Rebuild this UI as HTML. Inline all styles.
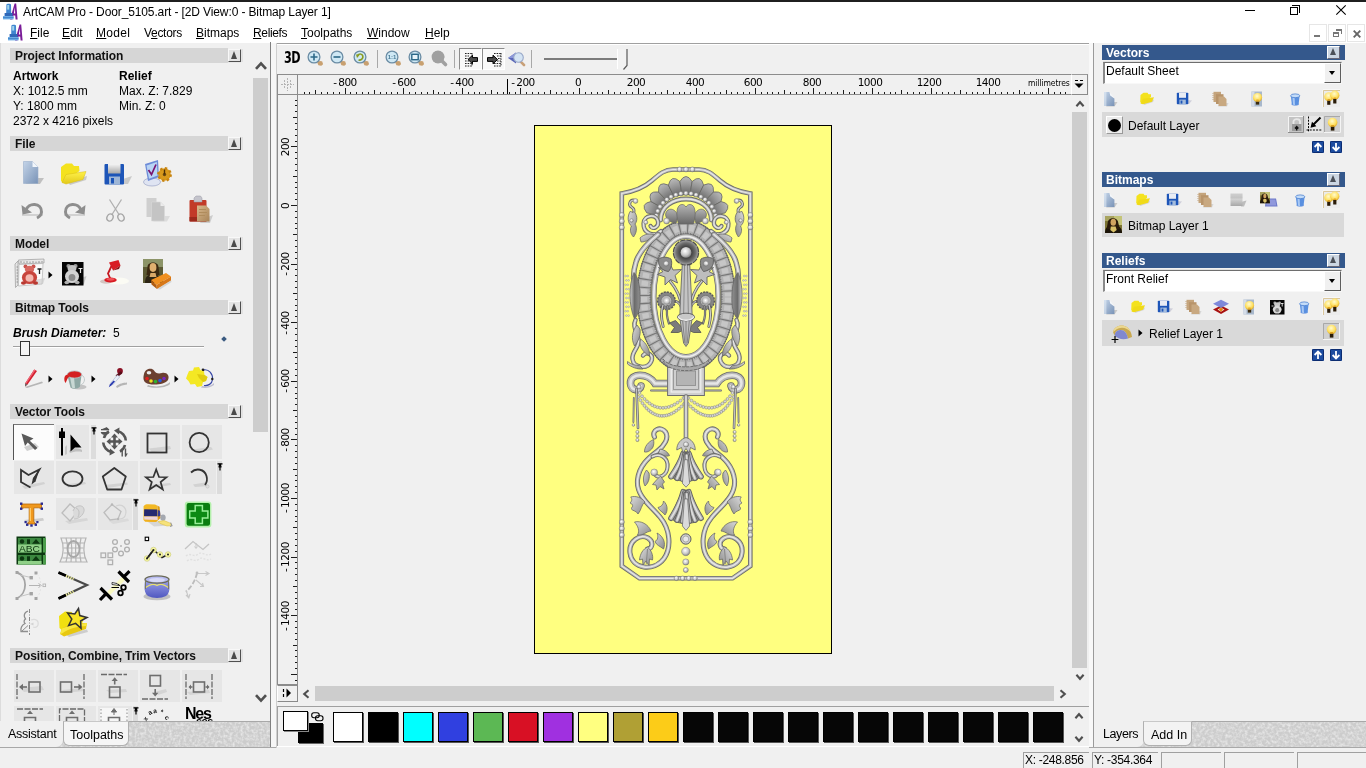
<!DOCTYPE html>
<html lang="en">
<head>
<meta charset="utf-8">
<title>ArtCAM Pro - Door_5105.art - [2D View:0 - Bitmap Layer 1]</title>
<style>
*{box-sizing:border-box;margin:0;padding:0}
html,body{width:1366px;height:768px;overflow:hidden;background:#f0f0f0}
body{position:relative;font-family:"Liberation Sans",Arial,sans-serif;font-size:12px;color:#000;line-height:1}
#app{position:absolute;left:0;top:0;width:1366px;height:768px;overflow:hidden;will-change:transform}
.a{position:absolute}
.ui{font-family:"Liberation Sans","DejaVu Sans",sans-serif;font-size:12px;white-space:nowrap}
.t{position:absolute;white-space:nowrap;font-size:12px;line-height:14px;height:14px}
.b{font-weight:bold}
u{text-decoration:underline;text-underline-offset:1px}
/* left panel section headers */
.hd{position:absolute;left:10px;width:218px;height:15px;background:#d6d6d6}
.hd span{position:absolute;left:5px;top:1px;letter-spacing:-.1px;font-weight:bold;font-size:12px;line-height:15px;white-space:nowrap;color:#111}
.hb{position:absolute;left:228px;width:13px;height:13px;background:#e4e4e4;border-right:1px solid #505050;border-bottom:1px solid #505050;border-left:1px solid #f8f8f8;border-top:1px solid #f8f8f8;box-shadow:2px 0 0 #e2e2e2,0 1px 0 #e8e8e8}
.hb i{position:absolute;left:2px;top:1px;width:0;height:0;border-left:3.5px solid transparent;border-right:3.5px solid transparent;border-bottom:8px solid #4a4a4a}
.cell{position:absolute;background:#e6e6e6}
.pin{position:absolute;background:#dcdcdc;width:5px}
svg{position:absolute;overflow:visible}
/* right panel */
.rh{position:absolute;left:1102px;width:243px;height:15px;background:#34588c}
.rh span{position:absolute;left:4px;top:1px;font-weight:bold;font-size:12px;line-height:15px;color:#fff;white-space:nowrap}
.rhb{position:absolute;left:1327px;width:13px;height:13px;background:#ccd6e2;border-right:1px solid #667;border-bottom:1px solid #667;border-left:1px solid #fff;border-top:1px solid #fff}
.rhb i{position:absolute;left:2px;top:1px;width:0;height:0;border-left:3.5px solid transparent;border-right:3.5px solid transparent;border-bottom:7.5px solid #4c5058}
.row{position:absolute;left:1102px;width:242px;background:#d9d9d9}
.combo{position:absolute;left:1103px;width:239px;height:22px;background:#fff;border-top:1px solid #6e6e6e;border-left:2px solid #8a8a8a;border-right:1px solid #f4f4f4;border-bottom:1px solid #f8f8f8;box-shadow:0 -1px 0 #e0e0e0}
.combo span{position:absolute;left:1px;top:1px;font-size:12px;line-height:14px;white-space:nowrap}
.combo b{position:absolute;right:0;top:0;width:17px;height:20px;background:#f0f0f0;border-right:1px solid #5e5e5e;border-bottom:1px solid #5e5e5e;border-left:1px solid #fff;border-top:1px solid #fff}
.combo b i{position:absolute;left:4px;top:7px;width:0;height:0;border-left:3.5px solid transparent;border-right:3.5px solid transparent;border-top:4px solid #000}
.rl{font-family:"DejaVu Sans","Liberation Sans",sans-serif;font-size:10.5px;letter-spacing:-.5px;line-height:12px;white-space:nowrap;color:#000}
.rl .hy{letter-spacing:1.2px}
.sw{position:absolute;top:712px;width:30px;height:30px;border:1px solid #000;box-shadow:1px 1px 0 #555}
.sp{position:absolute;top:752px;height:16px;border-left:1px solid #a0a0a0;border-top:1px solid #a0a0a0;font-family:"Liberation Sans",sans-serif;font-size:12px;line-height:15px;padding-left:2px;white-space:nowrap}
</style>
</head>
<body>
<div id="app">
<!-- window frame / title bar -->
<div class="a" style="left:0;top:0;width:1366px;height:2px;background:#1f1f1f"></div>
<div class="a" style="left:0;top:2px;width:1366px;height:41px;background:#fff"></div>
<svg style="left:1.5px;top:2.5px" width="16" height="17" viewBox="0 0 16 17"><path d="M8 16.5 L12.6 0.5 L14.2 0.5 L15.6 16.5 L13.6 16.5 L13.2 12.4 L11.4 12.4 L10.4 16.5Z" fill="#7a1c98"/><path d="M11.8 10.4 L12.9 4.4 L13.2 10.4Z" fill="#fff"/><path d="M4.4 1.8 C4.4 0.4 9 0.4 9 1.8 L9.2 10 L4.2 10Z" fill="#3f86d0"/><rect x="5.2" y="2" width="2" height="4.6" fill="#9fd4ec"/><rect x="2.6" y="10" width="8" height="3" fill="#2f68b8"/><rect x="1" y="13" width="10.6" height="3.4" fill="#6cace4"/><path d="M1 14.6 H11.6" stroke="#3a78c4" stroke-width=".8"/></svg>
<div class="t ui" style="left:23px;top:5px;font-size:12px;letter-spacing:-0.12px">ArtCAM Pro - Door_5105.art - [2D View:0 - Bitmap Layer 1]</div>
<!-- window buttons -->
<div class="a" style="left:1245px;top:10px;width:10px;height:1px;background:#000"></div>
<div class="a" style="left:1290px;top:7px;width:8px;height:8px;border:1px solid #000;background:#fff"></div>
<div class="a" style="left:1292px;top:5px;width:8px;height:8px;border-top:1px solid #000;border-right:1px solid #000"></div>
<svg style="left:1336px;top:5px" width="10" height="10" viewBox="0 0 10 10"><path d="M0.3 0.3 L9.7 9.7 M9.7 0.3 L0.3 9.7" stroke="#000" stroke-width="1.1" fill="none"/></svg>
<!-- menu bar -->
<svg style="left:7px;top:24px" width="16" height="17" viewBox="0 0 16 17"><path d="M8 16.5 L12.6 0.5 L14.2 0.5 L15.6 16.5 L13.6 16.5 L13.2 12.4 L11.4 12.4 L10.4 16.5Z" fill="#7a1c98"/><path d="M11.8 10.4 L12.9 4.4 L13.2 10.4Z" fill="#fff"/><path d="M4.4 1.8 C4.4 0.4 9 0.4 9 1.8 L9.2 10 L4.2 10Z" fill="#3f86d0"/><rect x="5.2" y="2" width="2" height="4.6" fill="#9fd4ec"/><rect x="2.6" y="10" width="8" height="3" fill="#2f68b8"/><rect x="1" y="13" width="10.6" height="3.4" fill="#6cace4"/><path d="M1 14.6 H11.6" stroke="#3a78c4" stroke-width=".8"/></svg>
<div class="t ui" style="left:30px;top:26px"><u>F</u>ile</div>
<div class="t ui" style="left:62px;top:26px"><u>E</u>dit</div>
<div class="t ui" style="left:96px;top:26px;letter-spacing:.3px"><u>M</u>odel</div>
<div class="t ui" style="left:144px;top:26px;letter-spacing:-.3px">V<u>e</u>ctors</div>
<div class="t ui" style="left:196px;top:26px"><u>B</u>itmaps</div>
<div class="t ui" style="left:253px;top:26px;letter-spacing:-.35px"><u>R</u>eliefs</div>
<div class="t ui" style="left:301px;top:26px"><u>T</u>oolpaths</div>
<div class="t ui" style="left:367px;top:26px"><u>W</u>indow</div>
<div class="t ui" style="left:425px;top:26px"><u>H</u>elp</div>
<!-- MDI child buttons -->
<div class="a" style="left:1309px;top:24px;width:18px;height:18px;border:1px solid #e6e6e6"></div>
<div class="a" style="left:1328px;top:24px;width:18px;height:18px;border:1px solid #e6e6e6"></div>
<div class="a" style="left:1347px;top:24px;width:18px;height:18px;border:1px solid #e6e6e6"></div>
<div class="a" style="left:1314px;top:35px;width:6px;height:2px;background:#777"></div>
<div class="a" style="left:1333px;top:32px;width:6px;height:5px;border:1px solid #777;border-top:2px solid #777"></div>
<div class="a" style="left:1336px;top:29px;width:6px;height:5px;border-top:2px solid #777;border-right:1px solid #777"></div>
<svg style="left:1353px;top:30px" width="8" height="8" viewBox="0 0 8 8"><path d="M0.7 0.7 L7.3 7.3 M7.3 0.7 L0.7 7.3" stroke="#666" stroke-width="1.9" fill="none"/></svg>
<!-- ================= LEFT PANEL ================= -->
<div class="a" style="left:0;top:43px;width:1px;height:705px;background:#dcdcdc"></div>
<div class="a" style="left:270px;top:42px;width:1px;height:706px;background:#808080"></div>
<div class="a" style="left:271px;top:43px;width:5px;height:705px;background:#f6f6f6"></div>
<!-- scrollbar -->
<div class="a" style="left:253px;top:78px;width:15px;height:354px;background:#cdcdcd"></div>
<svg style="left:255px;top:61px" width="12" height="9" viewBox="0 0 12 9"><path d="M1 7.8 L6 2.4 L11 7.8" stroke="#505050" stroke-width="2.7" fill="none"/></svg>
<svg style="left:255px;top:694px" width="12" height="9" viewBox="0 0 12 9"><path d="M1 1.2 L6 6.6 L11 1.2" stroke="#505050" stroke-width="2.7" fill="none"/></svg>

<!-- Project Information -->
<div class="hd" style="top:48px"><span>Project Information</span></div><div class="hb" style="top:49px"><i></i></div>
<div class="t b" style="left:13px;top:69px">Artwork</div>
<div class="t b" style="left:119px;top:69px">Relief</div>
<div class="t" style="left:13px;top:84px">X: 1012.5 mm</div>
<div class="t" style="left:119px;top:84px">Max. Z: 7.829</div>
<div class="t" style="left:13px;top:99px">Y: 1800 mm</div>
<div class="t" style="left:119px;top:99px">Min. Z: 0</div>
<div class="t" style="left:13px;top:114px">2372 x 4216 pixels</div>

<!-- File -->
<div class="hd" style="top:136px"><span>File</span></div><div class="hb" style="top:137px"><i></i></div>
<!--ICONS_FILE-->

<!-- Model -->
<div class="hd" style="top:236px"><span>Model</span></div><div class="hb" style="top:237px"><i></i></div>
<!--ICONS_MODEL-->

<!-- Bitmap Tools -->
<div class="hd" style="top:300px"><span>Bitmap Tools</span></div><div class="hb" style="top:301px"><i></i></div>
<div class="t b" style="left:13px;top:326px;font-style:italic">Brush Diameter:</div>
<div class="t" style="left:113px;top:326px">5</div>
<div class="a" style="left:13px;top:346px;width:191px;height:1px;background:#a0a0a0"></div>
<div class="a" style="left:13px;top:347px;width:191px;height:1px;background:#fff"></div>
<div class="a" style="left:20px;top:341px;width:10px;height:15px;background:#f4f4f4;border:1px solid #333"></div>
<div class="a" style="left:222px;top:337px;width:4px;height:4px;background:#3a5a80;transform:rotate(45deg)"></div>
<!--ICONS_BITMAP-->

<!-- Vector Tools -->
<div class="hd" style="top:404px"><span>Vector Tools</span></div><div class="hb" style="top:405px"><i></i></div>
<!-- row 1 cells -->
<div class="a" style="left:13px;top:424px;width:41px;height:36px;background:#fcfcfc;border-left:1px solid #555;border-top:1px solid #777"></div>
<div class="cell" style="left:56px;top:425px;width:33px;height:34px"></div><div class="pin" style="left:91px;top:425px;height:34px"></div>
<div class="cell" style="left:140px;top:425px;width:40px;height:34px"></div>
<div class="cell" style="left:182px;top:425px;width:40px;height:34px"></div>
<!-- row 2 cells -->
<div class="cell" style="left:14px;top:461px;width:40px;height:33px"></div>
<div class="cell" style="left:56px;top:461px;width:40px;height:33px"></div>
<div class="cell" style="left:98px;top:461px;width:40px;height:33px"></div>
<div class="cell" style="left:140px;top:461px;width:40px;height:33px"></div>
<div class="cell" style="left:182px;top:461px;width:34px;height:33px"></div><div class="pin" style="left:217px;top:461px;height:33px"></div>
<!-- row 3 cells -->
<div class="cell" style="left:56px;top:498px;width:40px;height:32px"></div>
<div class="cell" style="left:98px;top:498px;width:34px;height:32px"></div><div class="pin" style="left:133px;top:498px;height:32px"></div>
<!--ICONS_VECTOR-->

<!-- Position, Combine, Trim Vectors -->
<div class="hd" style="top:648px"><span>Position, Combine, Trim Vectors</span></div><div class="hb" style="top:649px"><i></i></div>
<div class="cell" style="left:14px;top:670px;width:40px;height:32px"></div>
<div class="cell" style="left:56px;top:670px;width:40px;height:32px"></div>
<div class="cell" style="left:98px;top:670px;width:40px;height:32px"></div>
<div class="cell" style="left:140px;top:670px;width:40px;height:32px"></div>
<div class="cell" style="left:182px;top:670px;width:40px;height:32px"></div>
<div class="cell" style="left:14px;top:706px;width:40px;height:15px"></div>
<div class="cell" style="left:56px;top:706px;width:40px;height:15px"></div>
<div class="cell" style="left:98px;top:706px;width:34px;height:15px"></div><div class="pin" style="left:133px;top:706px;height:15px"></div>
<!--ICONS_POS-->

<!-- bottom tabs -->
<svg style="left:1px;top:721px" width="269" height="26"><filter id="nz1" color-interpolation-filters="sRGB" x="0" y="0" width="100%" height="100%"><feTurbulence type="fractalNoise" baseFrequency="0.35" numOctaves="2" seed="3"/><feColorMatrix type="matrix" values="0 0 0 0 0.80  0 0 0 0 0.80  0 0 0 0 0.80  1.6 0 0 0 0.0"/></filter><rect width="269" height="26" fill="#f2f2f2"/><rect width="269" height="26" filter="url(#nz1)"/></svg>
<div class="a" style="left:63px;top:721px;width:207px;height:1px;background:#a8a8a8"></div>
<div class="a" style="left:0;top:721px;width:63px;height:26px;background:#f0f0f0;border-bottom-right-radius:7px"></div>
<div class="a" style="left:63px;top:721px;width:66px;height:25px;background:#f5f5f5;border:1px solid #b0b0b0;border-top-color:#c8c8c8;border-radius:0 0 6px 6px"></div>
<div class="a" style="left:0;top:747px;width:276px;height:1px;background:#a8a8a8"></div>
<div class="t ui" style="left:8px;top:727px;font-size:12.5px;letter-spacing:-.25px">Assistant</div>
<div class="t ui" style="left:70px;top:728px;font-size:12.5px">Toolpaths</div>
<!-- shared gradient defs -->
<svg width="0" height="0" style="left:0;top:0"><defs>
<linearGradient id="gDoc" x1="0" y1="0" x2="1" y2="1"><stop offset="0" stop-color="#c4d4e8"/><stop offset="1" stop-color="#7892b6"/></linearGradient>
<linearGradient id="gFold" x1="0" y1="0" x2="0" y2="1"><stop offset="0" stop-color="#fff24a"/><stop offset="1" stop-color="#e2c81a"/></linearGradient>
<linearGradient id="gGrey" x1="0" y1="0" x2="0" y2="1"><stop offset="0" stop-color="#f4f4f4"/><stop offset="1" stop-color="#a8a8a8"/></linearGradient>
<linearGradient id="gBowl" x1="0" y1="0" x2="0" y2="1"><stop offset="0" stop-color="#9aa0e8"/><stop offset="1" stop-color="#5058c0"/></linearGradient>
<radialGradient id="gBulb" cx="0.45" cy="0.35" r="0.7"><stop offset="0" stop-color="#fffbd0"/><stop offset="0.6" stop-color="#ffe060"/><stop offset="1" stop-color="#d8a020"/></radialGradient>
<linearGradient id="gTan" x1="0" y1="0" x2="1" y2="1"><stop offset="0" stop-color="#d8b88c"/><stop offset="1" stop-color="#a88458"/></linearGradient>
</defs></svg>

<!-- FILE row 1 -->
<!-- new -->
<svg style="left:22px;top:160px" width="24" height="26" viewBox="0 0 24 26"><path d="M14 18 L22 18 L18 24 L3 24 Z" fill="#b4b4b4" opacity=".8"/><path d="M1.5 1.5 L10.5 1.5 L16 7 L16 23.5 L1.5 23.5 Z" fill="url(#gDoc)" stroke="#9ab0cc" stroke-width=".6"/><path d="M10.5 1.5 L10.5 7 L16 7 Z" fill="#f2f6fb"/></svg>
<!-- open -->
<svg style="left:60px;top:162px" width="28" height="24" viewBox="0 0 28 24"><path d="M8 20 L27 14 L26 18 L10 23 Z" fill="#b8b8b8" opacity=".7"/><path d="M1 5 L6 1.5 L12 1.5 L14 4 L19 4 L19.5 9 L3 21 L1 19 Z" fill="#f4e21e"/><path d="M2 20.5 L6 12.5 L26 9.5 L23 17.5 L6 22 Z" fill="url(#gFold)" stroke="#d8bc10" stroke-width=".5"/></svg>
<!-- save -->
<svg style="left:103px;top:163px" width="30" height="23" viewBox="0 0 30 23"><path d="M20 16 L29 13 L25 21 L20 21Z" fill="#b8b8b8" opacity=".7"/><rect x="1.5" y="1" width="19.5" height="20.5" rx="1" fill="#1d55b8"/><rect x="5" y="1" width="12.5" height="9.5" fill="url(#gGrey)"/><rect x="6" y="13.5" width="11" height="8" fill="#9eb6d6"/><rect x="8" y="15" width="3" height="5.5" fill="#1d55b8"/></svg>
<!-- options -->
<svg style="left:143px;top:159px" width="30" height="28" viewBox="0 0 30 28"><ellipse cx="9" cy="23" rx="8.5" ry="4" fill="#dfe4f2" stroke="#8e98c0" stroke-width=".6"/><path d="M2 5 L15 1 L16 18 L5 22 Z" fill="#6e8cd8"/><path d="M3.5 6.5 L13.8 3 L14.6 16.5 L6 19.8 Z" fill="#b8d4f4"/><path d="M5.5 11 L8.5 15.5 L13 5.5" stroke="#7a1470" stroke-width="1.7" fill="none"/><circle cx="21.5" cy="15.5" r="6.2" fill="#d89a1c"/><circle cx="21.5" cy="15.5" r="6.2" fill="none" stroke="#c88410" stroke-width="2.4" stroke-dasharray="2.4 2.4"/><circle cx="21.5" cy="15.5" r="1.7" fill="#6a4a10"/><path d="M21.5 10.5 L21.5 15.5" stroke="#4a3008" stroke-width="1.4"/></svg>
<!-- FILE row 2 -->
<!-- undo -->
<svg style="left:20px;top:201px" width="26" height="20" viewBox="0 0 26 20"><path d="M2 14 L23 14" stroke="#d2d2d2" stroke-width="2"/><path d="M6 9.5 C8 1 22 1.5 21.5 11 C21.3 14 19 16 17 17" stroke="#8e8e8e" stroke-width="3" fill="none"/><path d="M1.5 4 L2.5 13.5 L12 11.5 Z" fill="#8e8e8e"/></svg>
<!-- redo -->
<svg style="left:61px;top:201px" width="26" height="20" viewBox="0 0 26 20"><path d="M3 14 L24 14" stroke="#d2d2d2" stroke-width="2"/><path d="M20 9.5 C18 1 4 1.5 4.5 11 C4.7 14 7 16 9 17" stroke="#8e8e8e" stroke-width="3" fill="none"/><path d="M24.5 4 L23.5 13.5 L14 11.5 Z" fill="#8e8e8e"/></svg>
<!-- cut -->
<svg style="left:105px;top:198px" width="22" height="25" viewBox="0 0 22 25"><path d="M4.5 1.5 L14 16.5 M16.5 1.5 L7 16.5" stroke="#b0b0b0" stroke-width="1.3" fill="none"/><ellipse cx="5" cy="19.5" rx="3" ry="3.6" transform="rotate(25 5 19.5)" fill="none" stroke="#a6a6a6" stroke-width="1.4"/><ellipse cx="16" cy="19.5" rx="3" ry="3.6" transform="rotate(-25 16 19.5)" fill="none" stroke="#a6a6a6" stroke-width="1.4"/></svg>
<!-- copy -->
<svg style="left:145px;top:197px" width="26" height="26" viewBox="0 0 26 26"><path d="M16 19 L25 19 L22 24.5 L8 24.5Z" fill="#dcdcdc"/><rect x="1.5" y="1" width="10" height="19" fill="#cfcfcf"/><path d="M6.5 5 L15.5 5 L19.5 9 L19.5 24 L6.5 24 Z" fill="#c4c4c4" stroke="#dadada" stroke-width=".6"/><path d="M15.5 5 L15.5 9 L19.5 9 Z" fill="#ececec"/></svg>
<!-- paste -->
<svg style="left:188px;top:195px" width="26" height="29" viewBox="0 0 26 29"><path d="M14 24 L25 20 L22 28 L12 28Z" fill="#c4c4c4" opacity=".8"/><rect x="1.5" y="5" width="17" height="21.5" rx="1" fill="#c23a28"/><rect x="1.5" y="22" width="17" height="4.5" fill="#9c2a1c"/><path d="M6 3 L8 1 L12.5 1 L14 3 L14 7 L6 7 Z" fill="#c4c4cc" stroke="#9a9aa4" stroke-width=".5"/><path d="M9 10.5 L18 10.5 L21.5 14 L21.5 26.5 L9 26.5 Z" fill="url(#gTan)"/><path d="M11 14.5 H18 M11 17.5 H19 M11 20.5 H17" stroke="#b08c5c" stroke-width="1"/></svg>

<!-- MODEL -->
<!-- new model (teddy on ruled sheet) -->
<svg style="left:14px;top:258px" width="32" height="31" viewBox="0 0 32 31"><path d="M1 6 L4 3 L4 27 L1.5 29.5Z" fill="#e6e6e6" stroke="#9a9a9a" stroke-width=".7"/><path d="M4.5 2 L30 1 L30 5 L5 6 Z" fill="#e8e8e8" stroke="#9a9a9a" stroke-width=".7"/><path d="M7 5 V3 M10 5 V3.5 M13 5 V3 M16 5 V3.5 M19 5 V3 M22 5 V3.5 M25 5 V3 M28 4.5 V3" stroke="#777" stroke-width=".7"/><path d="M2.5 9 H4 M2.5 12 H4 M2.5 15 H4 M2.5 18 H4 M2.5 21 H4 M2.5 24 H4" stroke="#777" stroke-width=".7"/><path d="M5 6.5 L29 5.5 L28 26 L4.5 28 Z" fill="#fafafa" stroke="#aaa" stroke-width=".6"/><path d="M20 22 L31 20 L29 26 L22 27Z" fill="#c8c8c8" opacity=".6"/><circle cx="11.5" cy="8.6" r="2" fill="#c8524c"/><circle cx="19.5" cy="8.6" r="2" fill="#c8524c"/><ellipse cx="15.5" cy="11.5" rx="4.6" ry="3.8" fill="#d86860"/><ellipse cx="15.5" cy="19.5" rx="7.6" ry="6.6" fill="#c8443c"/><ellipse cx="15.5" cy="20" rx="4" ry="3.8" fill="#f4b8b0"/><ellipse cx="9.5" cy="25" rx="2.6" ry="1.8" fill="#b83830"/><ellipse cx="21.5" cy="25" rx="2.6" ry="1.8" fill="#b83830"/><path d="M23.5 11 H27.5 M25.5 11 V16" stroke="#222" stroke-width="1.3"/></svg>
<svg style="left:48px;top:271px" width="5" height="8" viewBox="0 0 5 8"><path d="M0.5 0.5 L4.5 4 L0.5 7.5Z" fill="#000"/></svg>
<!-- greyscale teddy -->
<svg style="left:61px;top:261px" width="26" height="26" viewBox="0 0 26 26"><path d="M20 17 L25.5 15 L23 23 L20 24Z" fill="#b8b8b8" opacity=".7"/><rect x="1" y="1" width="21.5" height="23.5" fill="#050505"/><circle cx="7.5" cy="5" r="2.1" fill="#9a9a9a"/><circle cx="14.5" cy="5" r="2.1" fill="#9a9a9a"/><ellipse cx="11" cy="7.5" rx="4.4" ry="3.5" fill="#c0c0c0"/><ellipse cx="11" cy="15.5" rx="7" ry="6.6" fill="#d2d2d2"/><ellipse cx="11" cy="16.5" rx="3.4" ry="3.6" fill="#8a8a8a"/><ellipse cx="5.8" cy="21.5" rx="2.4" ry="1.7" fill="#b0b0b0"/><ellipse cx="16.2" cy="21.5" rx="2.4" ry="1.7" fill="#b0b0b0"/><path d="M17.5 7.5 H21.5 M19.5 7.5 V12" stroke="#e8e8e8" stroke-width="1.2"/></svg>
<!-- lamp -->
<svg style="left:99px;top:259px" width="31" height="27" viewBox="0 0 31 27"><ellipse cx="19" cy="22" rx="11" ry="3.6" fill="#fbfbf4"/><ellipse cx="7" cy="22.5" rx="6" ry="2.2" fill="#d4c4c0"/><path d="M10 3.5 L19.5 1 L21.5 6.5 L14 11.5 Z" fill="#d81c24"/><path d="M14 11.5 L21.5 6.5 L20 10 Z" fill="#8c1014"/><path d="M12.5 7 L9 14.5 L11.5 20" stroke="#c41820" stroke-width="1.8" fill="none"/><ellipse cx="11.5" cy="21" rx="6.2" ry="2.6" fill="#d81c24"/><ellipse cx="11.5" cy="20.3" rx="4" ry="1.4" fill="#f05058"/></svg>
<!-- mona lisa + block -->
<svg style="left:142px;top:258px" width="30" height="32" viewBox="0 0 30 32"><rect x="1" y="1" width="20" height="24" fill="#5c5a34"/><rect x="1" y="1" width="20" height="8" fill="#8c9468"/><path d="M3 25 C3 18 6 16.5 11 16.5 C16 16.5 19 18 19.5 25Z" fill="#2c2414"/><path d="M5.5 9 C5.5 3 16.5 3 16.5 9 L17.5 17 L4.5 17Z" fill="#3a2810"/><ellipse cx="11" cy="9.5" rx="3.4" ry="4.4" fill="#e0b070"/><path d="M8.5 15 L13.5 15 L14.5 19 L7.5 19Z" fill="#d8a868"/><path d="M9 22 L24 15 L29 18.5 L14.5 27 Z" fill="#f09020"/><path d="M9 22 L14.5 27 L15 31 L9.5 26.5Z" fill="#b05c10"/><path d="M14.5 27 L29 18.5 L29 22.5 L15 31Z" fill="#d87818"/><path d="M15 31 L29 22.5 L29.5 24 L18 31.5Z" fill="#c0c0c0" opacity=".6"/></svg>

<!-- BITMAP TOOLS -->
<!-- pencil -->
<svg style="left:22px;top:367px" width="24" height="24" viewBox="0 0 24 24"><path d="M3 20 L20 14.5 L21 16 L5 21Z" fill="#a8a8a8" opacity=".8"/><path d="M12.2 2.5 L15 4 L5.5 17.5 L3 19.5 L3.2 16.3 Z" fill="#d42030"/><path d="M12.2 2.5 L13.4 3.2 L4 17 L3.2 16.3Z" fill="#f06878"/><path d="M3.2 16.3 L5.5 17.5 L3 19.5Z" fill="#6a6a6a"/></svg>
<svg style="left:48px;top:375px" width="5" height="8" viewBox="0 0 5 8"><path d="M0.5 0.5 L4.5 4 L0.5 7.5Z" fill="#000"/></svg>
<!-- bucket -->
<svg style="left:62px;top:368px" width="26" height="23" viewBox="0 0 26 23"><ellipse cx="17" cy="19" rx="7.5" ry="2.6" fill="#b0b0b0" opacity=".7"/><path d="M5.5 8 L8.5 19.5 C11 21.5 16 21 18 18.5 L19.5 7Z" fill="#8ea8a4"/><path d="M8 9 L10 19.5 C11 20.3 12 20.4 13 20.3 L12 9Z" fill="#c8d8d4"/><ellipse cx="12.5" cy="6.5" rx="7.2" ry="3.6" fill="#d42020" stroke="#b8c4c4" stroke-width=".8"/><path d="M5.5 6.5 C2 7 1.5 12 3.5 15 C5 13 5 10 7.5 8.5Z" fill="#d42020"/><path d="M19.5 7 C24 9 23 15 19 17" stroke="#c0c8c8" stroke-width="1" fill="none"/></svg>
<svg style="left:91px;top:375px" width="5" height="8" viewBox="0 0 5 8"><path d="M0.5 0.5 L4.5 4 L0.5 7.5Z" fill="#000"/></svg>
<!-- dropper -->
<svg style="left:106px;top:366px" width="24" height="24" viewBox="0 0 24 24"><path d="M10 20.5 C14 17 17 17 21 16.5 L21 18.5 C17 19 15 19.5 11 22Z" fill="#a8a8a8" opacity=".8"/><circle cx="14" cy="5" r="2.9" fill="#8a1024"/><rect x="9.5" y="7" width="7" height="2.6" rx=".8" transform="rotate(-38 13 8.3)" fill="#5a0c18"/><path d="M11.3 9 L13.8 10.8 L6.8 18.8 L4.6 17.2 Z" fill="#e8eef8" stroke="#98a4c0" stroke-width=".5"/><path d="M7.6 14.5 L9 15.6 L5.4 19.6 L2.8 21.2 L3.8 18.4Z" fill="#2c3cb0"/></svg>
<!-- palette -->
<svg style="left:142px;top:367px" width="29" height="22" viewBox="0 0 29 22"><path d="M6 18 C14 21 24 19 28 15 L28 17 C24 21 12 22 5 19.5Z" fill="#a8a8a8" opacity=".8"/><path d="M2 7 C3 1.5 10 0.5 12 3.5 C13.5 6 16 7 20 6 C25 5 28 9 26 13 C23 18 8 19 3.5 15.5 C1 13.5 1.2 10 2 7Z" fill="#6c4030"/><ellipse cx="7" cy="5.8" rx="2.3" ry="1.7" fill="#ececec"/><circle cx="5" cy="11.5" r="1.8" fill="#e02020"/><circle cx="9" cy="14" r="1.8" fill="#f0e020"/><circle cx="13.5" cy="14.6" r="1.8" fill="#30b030"/><circle cx="18" cy="13.6" r="1.8" fill="#2858e0"/><circle cx="22" cy="11.5" r="1.8" fill="#7828c0"/></svg>
<svg style="left:174px;top:375px" width="5" height="8" viewBox="0 0 5 8"><path d="M0.5 0.5 L4.5 4 L0.5 7.5Z" fill="#000"/></svg>
<!-- bitmap to vector -->
<svg style="left:185px;top:366px" width="30" height="24" viewBox="0 0 30 24"><path d="M17 20 C22 21 26 20 29 17 L29 19 C25 22 20 22.5 16 21.5Z" fill="#b0b0c8" opacity=".8"/><path d="M18 4 C24 2.5 28 8 27.5 13.5 C27 18 23 20 19 19.5" stroke="#3848a8" stroke-width="1.2" fill="none"/><circle cx="18" cy="4" r="1.4" fill="#222"/><circle cx="27.3" cy="13" r="1.2" fill="#222"/><path d="M4 5 L8 4.5 L9 1.5 L14 1 L15.5 4 L19 5.5 L19.5 9 L22.5 11 L21 15 L18 16 L17 20 L12 21 L10 18 L5.5 18.5 L3.5 15 L1 12.5 L2.5 8.5Z" fill="#f4e824"/><path d="M12 8 L19.5 9 L22.5 11 L21 15 L18 16 L14 12Z" fill="#e0cc10"/></svg>
<!-- VECTOR TOOLS row 1 -->
<!-- select arrow -->
<svg style="left:18px;top:430px" width="24" height="24" viewBox="0 0 24 24"><path d="M6 17 L17 13 L21 17 L9 21Z" fill="#c4c4c4" opacity=".8"/><path d="M3.5 3.5 L15.5 8.5 L11.8 10.8 L19.5 18 L17 20 L9.8 12.6 L7 16Z" fill="#5a5a5a"/></svg>
<!-- node edit -->
<svg style="left:57px;top:427px" width="30" height="30" viewBox="0 0 30 30"><path d="M12 24 C16 20 22 21 25 23 L25 25 C20 24 16 25 13 26Z" fill="#c0c0c0"/><path d="M8 20 L10 18 L10 27 L8 28Z" fill="#c8c8c8"/><rect x="4" y="1" width="2" height="27.5" fill="#000"/><rect x="2" y="4.5" width="6" height="6.5" fill="#000"/><path d="M13.5 7.5 L13.5 24.5 L18 20.5 L24.5 20.5 Z" fill="#000"/></svg>
<svg style="left:91px;top:427px" width="6" height="8" viewBox="0 0 6 8"><path d="M0.5 0.8 H5.5 M1.5 3.8 H4.5 M3 3.8 V7.5" stroke="#000" stroke-width="1.2"/><rect x="1.8" y="0.8" width="2.4" height="3" fill="#000"/></svg>
<!-- transform -->
<svg style="left:100px;top:427px" width="29" height="30" viewBox="0 0 29 30"><g fill="#555" stroke="none"><path d="M14.5 6.5 L18 10.5 L15.8 10.5 L15.8 13.2 L18.5 13.2 L18.5 11 L22.5 14.5 L18.5 18 L18.5 15.8 L15.8 15.8 L15.8 18.5 L18 18.5 L14.5 22.5 L11 18.5 L13.2 18.5 L13.2 15.8 L10.5 15.8 L10.5 18 L6.5 14.5 L10.5 11 L10.5 13.2 L13.2 13.2 L13.2 10.5 L11 10.5Z"/></g><g fill="none" stroke="#555" stroke-width="2.6"><path d="M17.5 4 C22 5 25.5 9 25.8 13.5"/><path d="M11.5 25 C7 24 3.5 20 3.2 15.5"/><path d="M4 11 C5 7.5 7 5.5 9 4.5"/><path d="M25 18 C24 21.5 22 23.5 20 24.5"/></g><g fill="#555"><path d="M14 3.5 L19.5 0.5 L19 7.5Z"/><path d="M15 25.5 L9.5 28.5 L10 21.5Z"/><path d="M1 2.5 H9 L6.5 0.2 M1 5.5 H9 L3.5 7.8" /><rect x="1" y="2" width="8" height="1.3"/><rect x="1" y="5" width="8" height="1.3"/><path d="M6.5 0 L9.5 2.7 L6.5 3.3Z M3.5 8.3 L0.5 5.6 L3.5 5Z"/><rect x="21.5" y="21.5" width="1.4" height="8"/><rect x="24.8" y="21.5" width="1.4" height="8"/><path d="M19.8 24.5 L22.2 21 L22.9 24.5Z M27.9 26.5 L25.5 30 L24.8 26.5Z"/></g></svg>
<!-- rectangle -->
<svg style="left:144px;top:430px" width="30" height="26" viewBox="0 0 30 26"><path d="M5 18.5 L26 16 L27 19 L8 22.5Z" fill="#cfcfcf" opacity=".9"/><rect x="3.5" y="3.5" width="19" height="19" fill="none" stroke="#333" stroke-width="1.8"/></svg>
<!-- circle -->
<svg style="left:186px;top:430px" width="30" height="26" viewBox="0 0 30 26"><path d="M6 19.5 L25 17 L27 19.5 L10 23Z" fill="#cfcfcf" opacity=".9"/><circle cx="13.2" cy="12.5" r="9.6" fill="none" stroke="#333" stroke-width="1.8"/></svg>
<!-- row 2 -->
<!-- polyline -->
<svg style="left:17px;top:465px" width="30" height="27" viewBox="0 0 30 27"><path d="M5 21 L27 17 L28 19 L8 24Z" fill="#cfcfcf" opacity=".9"/><path d="M13.5 22.5 L4 17 L4 5 L11.5 10 L22.5 4.5 L16.5 15" fill="none" stroke="#333" stroke-width="1.8" stroke-linejoin="miter"/><path d="M22.5 4.5 L18.5 16.5 L14.5 19.5 L16 13Z" fill="#333"/></svg>
<!-- ellipse -->
<svg style="left:59px;top:468px" width="30" height="22" viewBox="0 0 30 22"><path d="M6 16.5 L26 14 L27 16 L9 19.5Z" fill="#cfcfcf" opacity=".9"/><ellipse cx="13.5" cy="10.8" rx="10" ry="7.4" fill="none" stroke="#333" stroke-width="1.8"/></svg>
<!-- pentagon -->
<svg style="left:100px;top:466px" width="30" height="26" viewBox="0 0 30 26"><path d="M5 19 L27 16.5 L28 18.5 L8 22Z" fill="#cfcfcf" opacity=".9"/><path d="M14.3 2 L25.8 10.5 L21.5 23.5 L7.2 23.5 L2.8 10.5Z" fill="none" stroke="#333" stroke-width="1.8" stroke-linejoin="round"/></svg>
<!-- star -->
<svg style="left:143px;top:467px" width="30" height="26" viewBox="0 0 30 26"><path d="M6 18 L27 16 L28 18 L9 21Z" fill="#cfcfcf" opacity=".9"/><path d="M13.2 2.5 L16 10 L23.5 10.2 L17.6 15 L19.8 22.5 L13.2 18 L6.6 22.5 L8.8 15 L2.9 10.2 L10.4 10Z" fill="none" stroke="#333" stroke-width="1.7" stroke-linejoin="miter"/></svg>
<!-- arc -->
<svg style="left:186px;top:466px" width="30" height="26" viewBox="0 0 30 26"><path d="M7 18.5 L19 16.5 L23 20 L9 21Z" fill="#cfcfcf" opacity=".9"/><path d="M5 6.5 C10 1.5 18.5 3 20.5 10 C21.5 13.5 20.5 17 19 19" fill="none" stroke="#333" stroke-width="1.8"/><circle cx="21.5" cy="20.5" r="1.6" fill="#ddd" stroke="#bbb" stroke-width=".5"/></svg>
<svg style="left:217px;top:463px" width="6" height="8" viewBox="0 0 6 8"><path d="M0.5 0.8 H5.5 M1.5 3.8 H4.5 M3 3.8 V7.5" stroke="#000" stroke-width="1.2"/><rect x="1.8" y="0.8" width="2.4" height="3" fill="#000"/></svg>
<!-- row 3 -->
<!-- text T -->
<svg style="left:19px;top:501px" width="26" height="27" viewBox="0 0 26 27"><path d="M5 19 L24 17 L25 19.5 L8 22Z" fill="#c8c8c8" opacity=".9"/><path d="M2.5 3 H22.5 V7.5 L19.5 6.8 H14.8 V20.5 L17 23 H8 L10.2 20.5 V6.8 H5.5 L2.5 7.5Z" fill="#f0981c" stroke="#b86808" stroke-width=".8"/><path d="M11.3 7 V20" stroke="#ffd070" stroke-width="1.2"/><g fill="#2a2a90"><rect x="1" y="1.5" width="2.4" height="2.4"/><rect x="21.6" y="1.5" width="2.4" height="2.4"/><rect x="1" y="6.5" width="2.4" height="2.4"/><rect x="21.6" y="6.5" width="2.4" height="2.4"/><rect x="7" y="22.5" width="2.4" height="2.4"/><rect x="15.6" y="22.5" width="2.4" height="2.4"/><rect x="11.3" y="23.3" width="2.4" height="2.4"/><rect x="5.5" y="20" width="2.2" height="2.2"/><rect x="17.3" y="20" width="2.2" height="2.2"/></g></svg>
<!-- disabled 1 -->
<svg style="left:59px;top:500px" width="32" height="28" viewBox="0 0 32 28"><path d="M6 21 L28 18 L29 20.5 L10 24Z" fill="#d6d6d6"/><path d="M3 13 L11 4 L19 11 L11 21Z" fill="none" stroke="#bdbdbd" stroke-width="1.3"/><path d="M14 11 C16 5 24 4 25 9 C26 13 21 19 15 19" fill="#dadada" stroke="#c4c4c4" stroke-width="1"/><path d="M17 8 C20 9 21 13 19 17" stroke="#c0c0c0" stroke-width="1" fill="none"/></svg>
<!-- disabled 2 -->
<svg style="left:101px;top:500px" width="32" height="28" viewBox="0 0 32 28"><path d="M8 21 L27 18.5 L28 21 L12 24Z" fill="#dadada"/><path d="M3 12.5 L11 4.5 L20 11.5 L17 19 L9 20Z" fill="none" stroke="#bdbdbd" stroke-width="1.3"/><path d="M15 6 C22 3 27 9 24 16 C23 18 20 19 18 19" fill="none" stroke="#d2d2d2" stroke-width="1.2"/><circle cx="11" cy="4.5" r="1.2" fill="#b8b8b8"/><circle cx="17" cy="19" r="1.2" fill="#b8b8b8"/></svg>
<svg style="left:133px;top:499px" width="6" height="8" viewBox="0 0 6 8"><path d="M0.5 0.8 H5.5 M1.5 3.8 H4.5 M3 3.8 V7.5" stroke="#000" stroke-width="1.2"/><rect x="1.8" y="0.8" width="2.4" height="3" fill="#000"/></svg>
<!-- tape measure -->
<svg style="left:142px;top:502px" width="31" height="26" viewBox="0 0 31 26"><path d="M6 20 L20 19 L27 23.5 L12 24.5Z" fill="#cfcfcf" opacity=".8"/><path d="M1.6 4.5 C2 2.8 4 2.2 6 2.2 L13 2.4 L15.5 4 L15.8 18.6 L14 20 L3 19.6 L1.5 18Z" fill="#f2b824"/><path d="M13 2.4 L17.6 4.8 L18.6 16 L15.8 18.6 L15.5 4Z" fill="#dc9c18"/><path d="M2.2 7.2 L15.2 7.6 L15.4 14.4 L2 14.2Z" fill="#262a70"/><path d="M15.8 8 L18 8.8 L18.4 14 L15.9 14.6Z" fill="#3a3e90"/><path d="M2 14.4 L15.4 14.6 L15.5 18 L2.4 17.8Z" fill="#ecd4dc"/><path d="M2.4 17.8 L15.5 18 L14 20 L3 19.6Z" fill="#f0b020"/><ellipse cx="21" cy="15.6" rx="2.7" ry="3.2" fill="#a4a8b0"/><path d="M16 19.5 L22 18.6 L29 21.4 L29.6 23.6 L25 24 L18 21.5Z" fill="#f6e27a" stroke="#d8b838" stroke-width=".5"/><path d="M28.6 20.6 L30 23.8 L28 24.6" stroke="#9a9a9a" stroke-width="1.1" fill="none"/></svg>
<!-- green cross -->
<svg style="left:184px;top:501px" width="28" height="27" viewBox="0 0 28 27"><rect x="0.8" y="0.4" width="26.6" height="26" rx="3" fill="#b4f0ac"/><rect x="2.6" y="2" width="23.4" height="22.8" rx="2" fill="#0a7e10"/><path d="M11.2 4.4 H18.4 V9.9 H23.9 V17 H18.4 V22.6 H11.2 V17 H5.7 V9.9 H11.2Z" fill="#0c8a14" stroke="#98f098" stroke-width="1.5"/></svg>
<!-- row 4 -->
<!-- ABC plate -->
<svg style="left:16px;top:536px" width="30" height="29" viewBox="0 0 30 29"><rect x="0.5" y="0.5" width="29" height="28" fill="#0c3810"/><rect x="2" y="2" width="23.5" height="14.5" fill="#3c8840"/><rect x="2" y="8.5" width="23.5" height="8" fill="#90d088"/><rect x="27" y="2" width="3" height="14.5" fill="#4c9c4c"/><rect x="2" y="19" width="23.5" height="9.5" fill="#3c8840"/><rect x="2" y="25" width="23.5" height="3.5" fill="#90d088"/><rect x="27" y="19" width="3" height="9.5" fill="#4c9c4c"/><circle cx="6" cy="5.5" r="2.2" fill="#0c3810"/><rect x="11" y="3.3" width="3" height="4.6" fill="#0c3810"/><path d="M16 7.8 L20 3 L24 7.8Z" fill="#0c3810"/><circle cx="6" cy="22.5" r="2.2" fill="#0c3810"/><rect x="11" y="20.3" width="3" height="4.6" fill="#0c3810"/><path d="M16 24.8 L20 20 L24 24.8Z" fill="#0c3810"/><text x="3" y="16" font-family="Liberation Sans, sans-serif" font-size="8.5" fill="#0c3810" textLength="21" lengthAdjust="spacingAndGlyphs">ABC</text></svg>
<!-- grid warp -->
<svg style="left:59px;top:536px" width="30" height="28" viewBox="0 0 30 28"><g fill="none" stroke="#b4b4b4" stroke-width="1.2"><path d="M2 2 H27 C24 9 24 19 28 26 H1 C5 19 5 9 2 2Z"/><path d="M7 2 C9 9 9 19 7 26 M12 2 C13 9 13 19 12 26 M17 2 C16.5 9 16.5 19 17 26 M22 2 C20.5 9 20.5 19 22 26"/><path d="M3.5 7 H25.5 M4.5 12 H24.5 M4.5 17 H24.8 M3.5 22 H26"/></g><ellipse cx="14.5" cy="13" rx="6" ry="8" fill="none" stroke="#a8a8a8" stroke-width="1.8"/></svg>
<!-- squares/circles -->
<svg style="left:100px;top:538px" width="31" height="28" viewBox="0 0 31 28"><g fill="none" stroke="#b0b0b0" stroke-width="1.3"><rect x="1" y="15" width="4.6" height="4.6"/><rect x="8" y="15" width="4.6" height="4.6"/><rect x="8" y="22" width="4.6" height="4.6"/><circle cx="15" cy="4" r="2.4"/><circle cx="27" cy="4" r="2.4"/><circle cx="15" cy="11.5" r="2.4"/><circle cx="27" cy="11.5" r="2.4"/><circle cx="21" cy="15.5" r="2.4"/></g><circle cx="21" cy="8" r="0.9" fill="#b0b0b0"/></svg>
<!-- node smooth -->
<svg style="left:142px;top:536px" width="30" height="28" viewBox="0 0 30 28"><rect x="3.2" y="1.2" width="3.4" height="3.4" fill="#fff" stroke="#000" stroke-width="1.1"/><path d="M5 22.5 L11.5 14 L18 19.5 L20 21.5 L26 18.5" fill="none" stroke="#222" stroke-width="1.6"/><g fill="#f8f8a0" stroke="#c8c878" stroke-width=".6"><circle cx="5" cy="22.5" r="2.8"/><circle cx="11.5" cy="14" r="2.8"/><circle cx="18" cy="18.5" r="2.8"/><circle cx="26" cy="18.5" r="2.8"/></g><g fill="#222"><circle cx="5" cy="22.5" r="1"/><circle cx="11.5" cy="14" r="1"/><circle cx="18" cy="18.5" r="1"/><circle cx="26" cy="18.5" r="1"/></g><path d="M5 22.5 L11.5 14" stroke="#222" stroke-width="1.6"/></svg>
<!-- faint zigzag -->
<svg style="left:184px;top:540px" width="30" height="26" viewBox="0 0 30 26"><path d="M1 9 L9 1.5 L19 9.5 L25 4" fill="none" stroke="#c4c4c4" stroke-width="1.3"/><path d="M12 3 V8 M10.5 6.5 L12 8.5 L13.5 6.5" stroke="#c8c8c8" stroke-width="1" fill="none"/><path d="M2 16 C6 12 10 18 14 14 C18 11 22 17 27 14 M3 21 C8 17 11 23 15 19 C19 16 22 22 27 19" fill="none" stroke="#e0e0e0" stroke-width="1.4" stroke-dasharray="2 1.5"/></svg>
<!-- row 5 -->
<!-- grey curve nodes -->
<svg style="left:15px;top:570px" width="32" height="31" viewBox="0 0 32 31"><path d="M1.5 2.5 C13 5 13 24 1.5 28.5" fill="none" stroke="#a4a4a4" stroke-width="1.8"/><path d="M5 5 L16 7.5 M5 26.5 L16 23.5" stroke="#c4c4c4" stroke-width="1"/><g fill="#a4a4a4"><rect x="0.5" y="1" width="3" height="3"/><rect x="0.5" y="27" width="3" height="3"/><rect x="14.5" y="6" width="3.4" height="3.4"/><rect x="14.5" y="22" width="3.4" height="3.4"/><rect x="19.5" y="1.5" width="3" height="3"/><rect x="19.5" y="27" width="3" height="3"/></g><path d="M14 15.5 H26 M23.5 13.5 L26.5 15.5 L23.5 17.5" stroke="#b4b4b4" stroke-width="1" fill="none"/><rect x="28" y="14" width="2.6" height="2.6" fill="none" stroke="#b4b4b4" stroke-width=".9"/><path d="M22 4 C27 8 27 23 22 27" stroke="#e2e2e2" stroke-width="1" fill="none" stroke-dasharray="2 2"/></svg>
<!-- black V -->
<svg style="left:57px;top:570px" width="32" height="31" viewBox="0 0 32 31"><path d="M1.5 2.5 L30 15 L1.5 28.5" fill="none" stroke="#4a4a4a" stroke-width="2.2"/><path d="M1.5 2.5 L9 5.8 M1.5 28.5 L9 25" stroke="#000" stroke-width="2.8"/><path d="M9 5.8 L16.5 9.1 M9 25 L16.5 21.4" stroke="#f4f4a0" stroke-width="2.8" stroke-dasharray="1.2 1.2"/></svg>
<!-- scissors trim -->
<svg style="left:99px;top:570px" width="32" height="32" viewBox="0 0 32 32"><path d="M8 22 L24 6 L27 9 L11 25Z" fill="#f8f8c0"/><path d="M19.5 1.5 L30 12 M24.8 6.8 L30.5 1.2" stroke="#000" stroke-width="3.2"/><path d="M1.5 18 L13 29.5 M6.8 23.8 L1 30" stroke="#000" stroke-width="3.2"/><path d="M13 13.5 L20 14.5 L21 16 M12.5 17.5 L20 17.5" stroke="#000" stroke-width="1" fill="none"/><path d="M13 12.5 L18 13.5 L20 15.5 L13 14.5Z" fill="#fff" stroke="#000" stroke-width=".7"/><circle cx="24.5" cy="17.5" r="2.3" fill="none" stroke="#000" stroke-width="1.8"/><circle cx="21.5" cy="23" r="2.3" fill="none" stroke="#000" stroke-width="1.8"/></svg>
<!-- blue bowl -->
<svg style="left:142px;top:573px" width="30" height="28" viewBox="0 0 30 28"><ellipse cx="15" cy="23.5" rx="13.5" ry="3.8" fill="#b4b4b4" opacity=".8"/><path d="M3 7 C2 14 2 20 6 23 C11 25.5 19 25.5 24 23 C28 20 28 14 27 7Z" fill="url(#gBowl)"/><path d="M3 15 C8 11 12 10.5 15 12.5 C18 10.5 22 11 27 15" fill="none" stroke="#e8e070" stroke-width="1.2"/><ellipse cx="15" cy="6.5" rx="12" ry="3.6" fill="#b8bcf0" stroke="#6a6a58" stroke-width="1.3"/><path d="M3.5 7 V16 M26.5 7 V16" stroke="#7a7a60" stroke-width="1"/><ellipse cx="15" cy="7" rx="8" ry="2" fill="#d8daf8"/></svg>
<!-- faint arrows -->
<svg style="left:184px;top:570px" width="30" height="30" viewBox="0 0 30 30"><path d="M13 3 C11 12 7 17 2 22" fill="none" stroke="#bcbcbc" stroke-width="1.8" stroke-dasharray="5 2"/><path d="M14 3.5 H24 M21.5 1.5 L25 3.5 L21.5 5.5" stroke="#c8c8c8" stroke-width="1.1" fill="none"/><path d="M12 10 L19 16 M16 16.5 L19.5 16.5 L18.5 13" stroke="#c8c8c8" stroke-width="1.1" fill="none"/><path d="M2 20 L4.5 27.5 M2 25 L4.8 28 L6 24" stroke="#c8c8c8" stroke-width="1.1" fill="none"/><circle cx="13" cy="3" r="1.4" fill="#c0c0c0"/></svg>
<!-- row 6 -->
<!-- mirror -->
<svg style="left:19px;top:608px" width="24" height="28" viewBox="0 0 24 28"><path d="M10.5 1 V27" stroke="#8a8a8a" stroke-width="1" stroke-dasharray="4 1.5 1 1.5"/><path d="M9 3 C4 5 5 9 6.5 11 C5 12 4.5 14 6 15.5 C3 17 1.5 20 2 23.5 H9" fill="none" stroke="#8e8e8e" stroke-width="1.3"/><path d="M3 23 L9 17.5" stroke="#8e8e8e" stroke-width="1"/><path d="M12 12 C17 10 20 13 19 17 C18.5 19 16 20 14 19" fill="none" stroke="#dcdcdc" stroke-width="1.2"/><path d="M11 16 L14.5 14.5 L14.5 17.5Z" fill="#d4d4d4"/></svg>
<!-- star folder -->
<svg style="left:57px;top:607px" width="33" height="31" viewBox="0 0 33 31"><path d="M8 27 L30 22.5 L31 25 L12 30Z" fill="#c4c4c4" opacity=".8"/><path d="M2 9 L8 4.5 L15 5 L15 12 L26 14 L24 19 L6 24 L2.5 21Z" fill="#f0e010"/><path d="M3 27 L5 21.5 C12 17 20 15.5 30 16 L29 22 L7 29.5Z" fill="#e8c810"/><path d="M3 27 L5 21.5 C12 18.5 20 17 30 16 L29.5 19 C20 19.5 12 21.5 5 26.5Z" fill="#f8e840"/><path d="M21.5 1.5 L22.8 8.6 L30 10.5 L23.6 14 L24 21.2 L18.6 16.4 L11.6 18.6 L14.8 12 L10.6 6 L17.8 7Z" fill="#f8e428" stroke="#333" stroke-width="1.5" stroke-linejoin="miter"/></svg>
<!-- POSITION row 1 -->
<svg style="left:14px;top:670px" width="40" height="32" viewBox="0 0 40 32"><path d="M6 18 L28 16 L30 20 L10 22Z" fill="#d4d4d4"/><path d="M3 4 V29" stroke="#6a6a6a" stroke-width="1.3" stroke-dasharray="6 1.5"/><rect x="15" y="12" width="11" height="10" fill="none" stroke="#6e6e6e" stroke-width="1.6"/><path d="M6 17 H13" stroke="#6e6e6e" stroke-width="1.6"/><path d="M5 17 L9 13.8 V20.2Z" fill="#6e6e6e"/></svg>
<svg style="left:56px;top:670px" width="40" height="32" viewBox="0 0 40 32"><path d="M6 20 L26 18 L28 21 L8 23Z" fill="#d4d4d4"/><path d="M28 4 V29" stroke="#6a6a6a" stroke-width="1.3" stroke-dasharray="6 1.5"/><rect x="4.5" y="12" width="11" height="10" fill="none" stroke="#6e6e6e" stroke-width="1.6"/><path d="M18 17 H25" stroke="#6e6e6e" stroke-width="1.6"/><path d="M26.5 17 L22.5 13.8 V20.2Z" fill="#6e6e6e"/></svg>
<svg style="left:98px;top:670px" width="40" height="32" viewBox="0 0 40 32"><path d="M8 20 L28 19 L29 22 L12 23Z" fill="#d4d4d4"/><path d="M3 4.5 H29" stroke="#6a6a6a" stroke-width="1.3" stroke-dasharray="6 1.5"/><rect x="11.5" y="17" width="10.5" height="10.5" fill="none" stroke="#6e6e6e" stroke-width="1.6"/><path d="M16.7 9 V14.5" stroke="#6e6e6e" stroke-width="1.6"/><path d="M16.7 7.2 L13.6 11 H19.8Z" fill="#6e6e6e"/></svg>
<svg style="left:140px;top:670px" width="40" height="32" viewBox="0 0 40 32"><path d="M14 22 L26 19 L27 22 L18 25Z" fill="#d4d4d4"/><path d="M2 29 H28" stroke="#6a6a6a" stroke-width="1.3" stroke-dasharray="6 1.5"/><rect x="10" y="5.5" width="10.5" height="10.5" fill="none" stroke="#6e6e6e" stroke-width="1.6"/><path d="M15.2 19 V24" stroke="#6e6e6e" stroke-width="1.6"/><path d="M15.2 26.5 L12 22.8 H18.4Z" fill="#6e6e6e"/></svg>
<svg style="left:182px;top:670px" width="40" height="32" viewBox="0 0 40 32"><path d="M5 22 L27 20 L28 23 L8 25Z" fill="#d4d4d4"/><path d="M4 4 V29 M30 4 V29" stroke="#6a6a6a" stroke-width="1.3" stroke-dasharray="6 1.5"/><rect x="11.5" y="12" width="11" height="10" fill="none" stroke="#6e6e6e" stroke-width="1.6"/><path d="M6.5 17 L9 14.5 V19.5Z M27.5 17 L25 14.5 V19.5Z" fill="#6e6e6e"/><path d="M8 17 H10.5 M23.5 17 H26" stroke="#6e6e6e" stroke-width="1.4"/></svg>
<!-- POSITION row 2 (clipped) -->
<svg style="left:14px;top:706px" width="40" height="15" viewBox="0 0 40 15"><path d="M3 3 H29" stroke="#6a6a6a" stroke-width="1.3" stroke-dasharray="6 1.5"/><path d="M16 4.5 L13 8 H19Z" fill="#6e6e6e"/><path d="M10.5 15 V11.5 H21.5 V15" fill="none" stroke="#6e6e6e" stroke-width="1.6"/></svg>
<svg style="left:56px;top:706px" width="40" height="15" viewBox="0 0 40 15"><path d="M3.5 15 V3 H28.5 V15" fill="none" stroke="#6a6a6a" stroke-width="1.3" stroke-dasharray="6 1.5"/><path d="M16 4.5 L13 8 H19Z" fill="#6e6e6e"/><path d="M10.5 15 V11.5 H21.5 V15" fill="none" stroke="#6e6e6e" stroke-width="1.6"/></svg>
<div class="a" style="left:100px;top:708px;width:28px;height:13px;background:#f6f6f6"></div>
<svg style="left:98px;top:706px" width="40" height="15" viewBox="0 0 40 15"><path d="M3 15 V3 M29 15 V3" fill="none" stroke="#8a8a8a" stroke-width="1" stroke-dasharray="1.5 2"/><path d="M16 2.5 L13.4 6 H18.6Z M16 6 V9" fill="#6e6e6e" stroke="#6e6e6e" stroke-width="1"/><path d="M10.5 15 V11.5 H21.5 V15" fill="none" stroke="#6e6e6e" stroke-width="1.6"/></svg>
<svg style="left:133px;top:707px" width="6" height="8" viewBox="0 0 6 8"><path d="M0.5 0.8 H5.5 M1.5 3.8 H4.5 M3 3.8 V7.5" stroke="#000" stroke-width="1.2"/><rect x="1.8" y="0.8" width="2.4" height="3" fill="#000"/></svg>
<!-- text on curve -->
<svg style="left:143px;top:708px" width="28" height="13" viewBox="0 0 28 13"><g font-family="Liberation Sans, sans-serif" font-size="6.5" font-weight="bold" fill="#111"><text x="2" y="13" transform="rotate(-50 3 12)">x</text><text x="6" y="7" transform="rotate(-28 7 6)">a</text><text x="10.5" y="5.2" transform="rotate(-8 11 5)">a</text><text x="17" y="5.5" transform="rotate(20 17 5)">*</text><text x="22" y="10" transform="rotate(48 22 9)">c</text></g></svg>
<!-- Nes -->
<div class="a" style="left:185px;top:706px;width:30px;height:15px;overflow:hidden"><div class="a b" style="left:0;top:0;font-size:16px;line-height:16px;letter-spacing:-1.2px;white-space:nowrap">Nes</div><div class="a b" style="left:11px;top:10px;font-size:11px;line-height:11px;letter-spacing:-.5px;white-space:nowrap">ses</div></div>
<!-- ================= MAIN 2D VIEW ================= -->
<div class="a" style="left:276px;top:43px;width:814px;height:1px;background:#a0a0a0"></div>
<div class="a" style="left:276px;top:43px;width:1px;height:705px;background:#cfcfcf"></div>
<div class="a" style="left:277px;top:44px;width:812px;height:1px;background:#fff"></div>
<div class="a" style="left:1089px;top:43px;width:4px;height:705px;background:#f8f8f8"></div>
<div class="a" style="left:1093px;top:43px;width:1px;height:705px;background:#9a9a9a"></div>
<div class="a b" style="left:284px;top:50px;font-size:15px;line-height:16px;letter-spacing:-.6px;font-family:'DejaVu Sans Condensed','DejaVu Sans',sans-serif;white-space:nowrap;transform:scaleX(.83);transform-origin:0 0">3D</div>
<svg style="left:306px;top:49px" width="20" height="20" viewBox="0 0 20 20"><path d="M12 11 L16.8 15.2 L15.8 16.6 L12.4 16.2 L10.8 12.6Z" fill="#c8a070"/><circle cx="14.6" cy="14.2" r="2.2" fill="#c8a070"/><circle cx="8" cy="8" r="5.9" fill="#cfe8f4" stroke="#6a8ca4" stroke-width="1.3"/><path d="M8 4.5 V11.5 M4.5 8 H11.5" stroke="#2c6888" stroke-width="1.6"/></svg>
<svg style="left:329px;top:49px" width="20" height="20" viewBox="0 0 20 20"><path d="M12 11 L16.8 15.2 L15.8 16.6 L12.4 16.2 L10.8 12.6Z" fill="#c8a070"/><circle cx="14.6" cy="14.2" r="2.2" fill="#c8a070"/><circle cx="8" cy="8" r="5.9" fill="#cfe8f4" stroke="#6a8ca4" stroke-width="1.3"/><path d="M4.5 8 H11.5" stroke="#2c6888" stroke-width="1.6"/></svg>
<svg style="left:352px;top:49px" width="20" height="20" viewBox="0 0 20 20"><path d="M12 11 L16.8 15.2 L15.8 16.6 L12.4 16.2 L10.8 12.6Z" fill="#c8a070"/><circle cx="14.6" cy="14.2" r="2.2" fill="#c8a070"/><circle cx="8" cy="8" r="5.9" fill="#cfe8f4" stroke="#6a8ca4" stroke-width="1.3"/><path d="M5.5 7 C6 4.5 10 4.2 10.8 7 C11.4 9.5 9 11.5 6.5 11" fill="none" stroke="#8a9c20" stroke-width="1.7"/><path d="M4 5.5 L8 5.5 L5 9Z" fill="#8a9c20"/></svg>
<div class="a" style="left:377px;top:50px;width:1px;height:18px;background:#a8a8a8"></div>
<svg style="left:384px;top:49px" width="20" height="20" viewBox="0 0 20 20"><path d="M12 11 L16.8 15.2 L15.8 16.6 L12.4 16.2 L10.8 12.6Z" fill="#c8a070"/><circle cx="14.6" cy="14.2" r="2.2" fill="#c8a070"/><circle cx="8" cy="8" r="5.9" fill="#cfe8f4" stroke="#6a8ca4" stroke-width="1.3"/><text x="8" y="10.2" font-size="6" font-weight="bold" text-anchor="middle" fill="#4a7c98" font-family="Liberation Sans, sans-serif">1:1</text></svg>
<svg style="left:407px;top:49px" width="20" height="20" viewBox="0 0 20 20"><path d="M12 11 L16.8 15.2 L15.8 16.6 L12.4 16.2 L10.8 12.6Z" fill="#c8a070"/><circle cx="14.6" cy="14.2" r="2.2" fill="#c8a070"/><circle cx="8" cy="8" r="5.9" fill="#cfe8f4" stroke="#6a8ca4" stroke-width="1.3"/><rect x="4.8" y="5.3" width="6.4" height="5.4" fill="#e8f4fa" stroke="#2c6888" stroke-width="1.4"/></svg>
<svg style="left:430px;top:49px" width="20" height="20" viewBox="0 0 20 20"><path d="M11 11 L15.5 15.5" stroke="#a0a0a0" stroke-width="3.6" stroke-linecap="round"/><circle cx="8" cy="8" r="6.4" fill="#a4a4a4"/><path d="M2 8 L3 4 L6 2 L10 2 L13 4 L14.5 8 L13 12 L10 14 L6 14 L3 12Z" fill="#a0a0a0"/></svg>
<div class="a" style="left:454px;top:50px;width:1px;height:18px;background:#a8a8a8"></div>
<div class="a" style="left:459px;top:48px;width:23px;height:22px;background:#f9f9f9;border-left:1px solid #8c8c8c;border-top:1px solid #8c8c8c;border-right:1px solid #fff;border-bottom:1px solid #fff"></div>
<div class="a" style="left:482px;top:48px;width:23px;height:22px;background:#f9f9f9;border-left:1px solid #8c8c8c;border-top:1px solid #8c8c8c;border-right:1px solid #fff;border-bottom:1px solid #fff"></div>
<svg style="left:464px;top:52px" width="16" height="15" viewBox="0 0 16 15"><path d="M1 1.5 H8 M1 4 H5 M1 6.5 H4 M1 9 H5 M1 11.5 H8 M1 14 H8" stroke="#222" stroke-width="1.1" stroke-dasharray="1.6 1"/><path d="M8 1 V14" stroke="#222" stroke-width="1" stroke-dasharray="1.5 1.2"/><path d="M4 7.5 L8.5 3.2 V5.6 H13.5 V9.4 H8.5 V11.8Z" fill="#4a4a4a" stroke="#000" stroke-width="1"/></svg>
<svg style="left:486px;top:52px" width="16" height="15" viewBox="0 0 16 15"><path d="M8 1.5 H15 M11 4 H15 M12 6.5 H15 M11 9 H15 M8 11.5 H15 M8 14 H15" stroke="#222" stroke-width="1.1" stroke-dasharray="1.6 1"/><path d="M15 1 V14" stroke="#222" stroke-width="1" stroke-dasharray="1.5 1.2"/><path d="M11.5 7.5 L7 3.2 V5.6 H1.5 V9.4 H7 V11.8Z" fill="#4a4a4a" stroke="#000" stroke-width="1"/></svg>
<svg style="left:507px;top:50px" width="20" height="18" viewBox="0 0 20 18"><path d="M12 10 L17 15" stroke="#c8a078" stroke-width="2.6" stroke-linecap="round"/><path d="M1 8 L9 2.5 V13.5Z" fill="#5a66b8"/><path d="M1 8 L9 2.5 V8Z" fill="#8c98dc"/><circle cx="11.5" cy="7.5" r="4.8" fill="#d4e4f4" stroke="#98a8c8" stroke-width="1.1"/></svg>
<div class="a" style="left:531px;top:50px;width:1px;height:18px;background:#a8a8a8"></div>
<div class="a" style="left:544px;top:58px;width:73px;height:2px;background:#7c7c7c"></div>
<svg style="left:617px;top:48px" width="12" height="23" viewBox="0 0 12 23"><path d="M0.5 1 H10.5 V17 L7 21.5 H0.5Z" fill="#f2f2f2"/><path d="M10 1 V17.5 L6.5 21.5" fill="none" stroke="#5a5a5a" stroke-width="1.2"/><path d="M0.5 1 V21" stroke="#fff" stroke-width="1"/></svg>
<svg style="left:277px;top:74px" width="812" height="21" viewBox="277 74 812 21" shape-rendering="crispEdges">
<rect x="277" y="74" width="794" height="1" fill="#8c8c8c"/><rect x="277" y="94" width="794" height="1" fill="#8c8c8c"/><rect x="277" y="74" width="1" height="21" fill="#8c8c8c"/><rect x="297" y="74" width="1" height="21" fill="#8c8c8c"/>
<path d="M281 84.5 H294 M287.5 78 V91 M284.5 80 V89 M290.5 80 V89" stroke="#b4b4b4" stroke-width="1" stroke-dasharray="2 1"/>
<rect x="304" y="92" width="1" height="2" fill="#1a1a1a"/>
<rect x="309" y="92" width="1" height="2" fill="#1a1a1a"/>
<rect x="315" y="90" width="1" height="4" fill="#1a1a1a"/>
<rect x="321" y="92" width="1" height="2" fill="#1a1a1a"/>
<rect x="327" y="92" width="1" height="2" fill="#1a1a1a"/>
<rect x="333" y="92" width="1" height="2" fill="#1a1a1a"/>
<rect x="339" y="92" width="1" height="2" fill="#1a1a1a"/>
<rect x="345" y="88" width="1" height="6" fill="#1a1a1a"/>
<rect x="350" y="92" width="1" height="2" fill="#1a1a1a"/>
<rect x="356" y="92" width="1" height="2" fill="#1a1a1a"/>
<rect x="362" y="92" width="1" height="2" fill="#1a1a1a"/>
<rect x="368" y="92" width="1" height="2" fill="#1a1a1a"/>
<rect x="374" y="90" width="1" height="4" fill="#1a1a1a"/>
<rect x="380" y="92" width="1" height="2" fill="#1a1a1a"/>
<rect x="386" y="92" width="1" height="2" fill="#1a1a1a"/>
<rect x="391" y="92" width="1" height="2" fill="#1a1a1a"/>
<rect x="397" y="92" width="1" height="2" fill="#1a1a1a"/>
<rect x="403" y="88" width="1" height="6" fill="#1a1a1a"/>
<rect x="409" y="92" width="1" height="2" fill="#1a1a1a"/>
<rect x="415" y="92" width="1" height="2" fill="#1a1a1a"/>
<rect x="421" y="92" width="1" height="2" fill="#1a1a1a"/>
<rect x="427" y="92" width="1" height="2" fill="#1a1a1a"/>
<rect x="433" y="90" width="1" height="4" fill="#1a1a1a"/>
<rect x="438" y="92" width="1" height="2" fill="#1a1a1a"/>
<rect x="444" y="92" width="1" height="2" fill="#1a1a1a"/>
<rect x="450" y="92" width="1" height="2" fill="#1a1a1a"/>
<rect x="456" y="92" width="1" height="2" fill="#1a1a1a"/>
<rect x="462" y="88" width="1" height="6" fill="#1a1a1a"/>
<rect x="468" y="92" width="1" height="2" fill="#1a1a1a"/>
<rect x="474" y="92" width="1" height="2" fill="#1a1a1a"/>
<rect x="479" y="92" width="1" height="2" fill="#1a1a1a"/>
<rect x="485" y="92" width="1" height="2" fill="#1a1a1a"/>
<rect x="491" y="90" width="1" height="4" fill="#1a1a1a"/>
<rect x="497" y="92" width="1" height="2" fill="#1a1a1a"/>
<rect x="503" y="92" width="1" height="2" fill="#1a1a1a"/>
<rect x="509" y="92" width="1" height="2" fill="#1a1a1a"/>
<rect x="515" y="92" width="1" height="2" fill="#1a1a1a"/>
<rect x="520" y="88" width="1" height="6" fill="#1a1a1a"/>
<rect x="526" y="92" width="1" height="2" fill="#1a1a1a"/>
<rect x="532" y="92" width="1" height="2" fill="#1a1a1a"/>
<rect x="538" y="92" width="1" height="2" fill="#1a1a1a"/>
<rect x="544" y="92" width="1" height="2" fill="#1a1a1a"/>
<rect x="550" y="90" width="1" height="4" fill="#1a1a1a"/>
<rect x="556" y="92" width="1" height="2" fill="#1a1a1a"/>
<rect x="561" y="92" width="1" height="2" fill="#1a1a1a"/>
<rect x="567" y="92" width="1" height="2" fill="#1a1a1a"/>
<rect x="573" y="92" width="1" height="2" fill="#1a1a1a"/>
<rect x="579" y="88" width="1" height="6" fill="#1a1a1a"/>
<rect x="585" y="92" width="1" height="2" fill="#1a1a1a"/>
<rect x="591" y="92" width="1" height="2" fill="#1a1a1a"/>
<rect x="597" y="92" width="1" height="2" fill="#1a1a1a"/>
<rect x="602" y="92" width="1" height="2" fill="#1a1a1a"/>
<rect x="608" y="90" width="1" height="4" fill="#1a1a1a"/>
<rect x="614" y="92" width="1" height="2" fill="#1a1a1a"/>
<rect x="620" y="92" width="1" height="2" fill="#1a1a1a"/>
<rect x="626" y="92" width="1" height="2" fill="#1a1a1a"/>
<rect x="632" y="92" width="1" height="2" fill="#1a1a1a"/>
<rect x="638" y="88" width="1" height="6" fill="#1a1a1a"/>
<rect x="643" y="92" width="1" height="2" fill="#1a1a1a"/>
<rect x="649" y="92" width="1" height="2" fill="#1a1a1a"/>
<rect x="655" y="92" width="1" height="2" fill="#1a1a1a"/>
<rect x="661" y="92" width="1" height="2" fill="#1a1a1a"/>
<rect x="667" y="90" width="1" height="4" fill="#1a1a1a"/>
<rect x="673" y="92" width="1" height="2" fill="#1a1a1a"/>
<rect x="679" y="92" width="1" height="2" fill="#1a1a1a"/>
<rect x="684" y="92" width="1" height="2" fill="#1a1a1a"/>
<rect x="690" y="92" width="1" height="2" fill="#1a1a1a"/>
<rect x="696" y="88" width="1" height="6" fill="#1a1a1a"/>
<rect x="702" y="92" width="1" height="2" fill="#1a1a1a"/>
<rect x="708" y="92" width="1" height="2" fill="#1a1a1a"/>
<rect x="714" y="92" width="1" height="2" fill="#1a1a1a"/>
<rect x="720" y="92" width="1" height="2" fill="#1a1a1a"/>
<rect x="726" y="90" width="1" height="4" fill="#1a1a1a"/>
<rect x="731" y="92" width="1" height="2" fill="#1a1a1a"/>
<rect x="737" y="92" width="1" height="2" fill="#1a1a1a"/>
<rect x="743" y="92" width="1" height="2" fill="#1a1a1a"/>
<rect x="749" y="92" width="1" height="2" fill="#1a1a1a"/>
<rect x="755" y="88" width="1" height="6" fill="#1a1a1a"/>
<rect x="761" y="92" width="1" height="2" fill="#1a1a1a"/>
<rect x="767" y="92" width="1" height="2" fill="#1a1a1a"/>
<rect x="772" y="92" width="1" height="2" fill="#1a1a1a"/>
<rect x="778" y="92" width="1" height="2" fill="#1a1a1a"/>
<rect x="784" y="90" width="1" height="4" fill="#1a1a1a"/>
<rect x="790" y="92" width="1" height="2" fill="#1a1a1a"/>
<rect x="796" y="92" width="1" height="2" fill="#1a1a1a"/>
<rect x="802" y="92" width="1" height="2" fill="#1a1a1a"/>
<rect x="808" y="92" width="1" height="2" fill="#1a1a1a"/>
<rect x="813" y="88" width="1" height="6" fill="#1a1a1a"/>
<rect x="819" y="92" width="1" height="2" fill="#1a1a1a"/>
<rect x="825" y="92" width="1" height="2" fill="#1a1a1a"/>
<rect x="831" y="92" width="1" height="2" fill="#1a1a1a"/>
<rect x="837" y="92" width="1" height="2" fill="#1a1a1a"/>
<rect x="843" y="90" width="1" height="4" fill="#1a1a1a"/>
<rect x="849" y="92" width="1" height="2" fill="#1a1a1a"/>
<rect x="854" y="92" width="1" height="2" fill="#1a1a1a"/>
<rect x="860" y="92" width="1" height="2" fill="#1a1a1a"/>
<rect x="866" y="92" width="1" height="2" fill="#1a1a1a"/>
<rect x="872" y="88" width="1" height="6" fill="#1a1a1a"/>
<rect x="878" y="92" width="1" height="2" fill="#1a1a1a"/>
<rect x="884" y="92" width="1" height="2" fill="#1a1a1a"/>
<rect x="890" y="92" width="1" height="2" fill="#1a1a1a"/>
<rect x="895" y="92" width="1" height="2" fill="#1a1a1a"/>
<rect x="901" y="90" width="1" height="4" fill="#1a1a1a"/>
<rect x="907" y="92" width="1" height="2" fill="#1a1a1a"/>
<rect x="913" y="92" width="1" height="2" fill="#1a1a1a"/>
<rect x="919" y="92" width="1" height="2" fill="#1a1a1a"/>
<rect x="925" y="92" width="1" height="2" fill="#1a1a1a"/>
<rect x="931" y="88" width="1" height="6" fill="#1a1a1a"/>
<rect x="936" y="92" width="1" height="2" fill="#1a1a1a"/>
<rect x="942" y="92" width="1" height="2" fill="#1a1a1a"/>
<rect x="948" y="92" width="1" height="2" fill="#1a1a1a"/>
<rect x="954" y="92" width="1" height="2" fill="#1a1a1a"/>
<rect x="960" y="90" width="1" height="4" fill="#1a1a1a"/>
<rect x="966" y="92" width="1" height="2" fill="#1a1a1a"/>
<rect x="972" y="92" width="1" height="2" fill="#1a1a1a"/>
<rect x="977" y="92" width="1" height="2" fill="#1a1a1a"/>
<rect x="983" y="92" width="1" height="2" fill="#1a1a1a"/>
<rect x="989" y="88" width="1" height="6" fill="#1a1a1a"/>
<rect x="995" y="92" width="1" height="2" fill="#1a1a1a"/>
<rect x="1001" y="92" width="1" height="2" fill="#1a1a1a"/>
<rect x="1007" y="92" width="1" height="2" fill="#1a1a1a"/>
<rect x="1013" y="92" width="1" height="2" fill="#1a1a1a"/>
<rect x="1019" y="90" width="1" height="4" fill="#1a1a1a"/>
<rect x="1024" y="92" width="1" height="2" fill="#1a1a1a"/>
<rect x="1030" y="92" width="1" height="2" fill="#1a1a1a"/>
<rect x="1036" y="92" width="1" height="2" fill="#1a1a1a"/>
<rect x="1042" y="92" width="1" height="2" fill="#1a1a1a"/>
<rect x="1048" y="88" width="1" height="6" fill="#1a1a1a"/>
<rect x="1054" y="92" width="1" height="2" fill="#1a1a1a"/>
<rect x="1060" y="92" width="1" height="2" fill="#1a1a1a"/>
<rect x="1065" y="92" width="1" height="2" fill="#1a1a1a"/>
<rect x="507" y="79" width="1" height="15" fill="#000"/>
</svg>
<div class="a rl" style="left:325px;top:76px;width:40px;text-align:center"><span class="hy">-</span>800</div>
<div class="a rl" style="left:384px;top:76px;width:40px;text-align:center"><span class="hy">-</span>600</div>
<div class="a rl" style="left:442px;top:76px;width:40px;text-align:center"><span class="hy">-</span>400</div>
<div class="a rl" style="left:503px;top:76px;width:40px;text-align:center"><span class="hy">-</span>200</div>
<div class="a rl" style="left:558px;top:76px;width:40px;text-align:center">0</div>
<div class="a rl" style="left:616px;top:76px;width:40px;text-align:center">200</div>
<div class="a rl" style="left:675px;top:76px;width:40px;text-align:center">400</div>
<div class="a rl" style="left:733px;top:76px;width:40px;text-align:center">600</div>
<div class="a rl" style="left:792px;top:76px;width:40px;text-align:center">800</div>
<div class="a rl" style="left:850px;top:76px;width:40px;text-align:center">1000</div>
<div class="a rl" style="left:909px;top:76px;width:40px;text-align:center">1200</div>
<div class="a rl" style="left:968px;top:76px;width:40px;text-align:center">1400</div>
<div class="a rl" style="left:1028px;top:77px;font-family:DejaVu Sans Condensed,DejaVu Sans,sans-serif;font-size:8.5px;letter-spacing:-.1px">millimetres</div>
<div class="a" style="left:1071px;top:74px;width:17px;height:21px;background:#f0f0f0;border-left:1px solid #fff;border-top:1px solid #9a9a9a;border-right:1px solid #8a8a8a;border-bottom:1px solid #8a8a8a"></div>
<svg style="left:1074px;top:79px" width="10" height="10" viewBox="0 0 10 10"><path d="M1 1.5 H4 M6 1.5 H9" stroke="#000" stroke-width="1.2"/><path d="M0.5 4.5 H9.5 L5 9Z" fill="#000"/></svg>
<svg style="left:277px;top:95px" width="21" height="590" viewBox="277 95 21 590" shape-rendering="crispEdges">
<rect x="277" y="95" width="1" height="590" fill="#8c8c8c"/><rect x="297" y="95" width="1" height="590" fill="#8c8c8c"/><rect x="277" y="684" width="21" height="1" fill="#8c8c8c"/>
<rect x="295" y="100" width="2" height="1" fill="#1a1a1a"/>
<rect x="295" y="105" width="2" height="1" fill="#1a1a1a"/>
<rect x="295" y="111" width="2" height="1" fill="#1a1a1a"/>
<rect x="293" y="117" width="4" height="1" fill="#1a1a1a"/>
<rect x="295" y="123" width="2" height="1" fill="#1a1a1a"/>
<rect x="295" y="129" width="2" height="1" fill="#1a1a1a"/>
<rect x="295" y="135" width="2" height="1" fill="#1a1a1a"/>
<rect x="295" y="141" width="2" height="1" fill="#1a1a1a"/>
<rect x="291" y="146" width="6" height="1" fill="#1a1a1a"/>
<rect x="295" y="152" width="2" height="1" fill="#1a1a1a"/>
<rect x="295" y="158" width="2" height="1" fill="#1a1a1a"/>
<rect x="295" y="164" width="2" height="1" fill="#1a1a1a"/>
<rect x="295" y="170" width="2" height="1" fill="#1a1a1a"/>
<rect x="293" y="176" width="4" height="1" fill="#1a1a1a"/>
<rect x="295" y="182" width="2" height="1" fill="#1a1a1a"/>
<rect x="295" y="187" width="2" height="1" fill="#1a1a1a"/>
<rect x="295" y="193" width="2" height="1" fill="#1a1a1a"/>
<rect x="295" y="199" width="2" height="1" fill="#1a1a1a"/>
<rect x="291" y="205" width="6" height="1" fill="#1a1a1a"/>
<rect x="295" y="211" width="2" height="1" fill="#1a1a1a"/>
<rect x="295" y="217" width="2" height="1" fill="#1a1a1a"/>
<rect x="295" y="223" width="2" height="1" fill="#1a1a1a"/>
<rect x="295" y="228" width="2" height="1" fill="#1a1a1a"/>
<rect x="293" y="234" width="4" height="1" fill="#1a1a1a"/>
<rect x="295" y="240" width="2" height="1" fill="#1a1a1a"/>
<rect x="295" y="246" width="2" height="1" fill="#1a1a1a"/>
<rect x="295" y="252" width="2" height="1" fill="#1a1a1a"/>
<rect x="295" y="258" width="2" height="1" fill="#1a1a1a"/>
<rect x="291" y="264" width="6" height="1" fill="#1a1a1a"/>
<rect x="295" y="269" width="2" height="1" fill="#1a1a1a"/>
<rect x="295" y="275" width="2" height="1" fill="#1a1a1a"/>
<rect x="295" y="281" width="2" height="1" fill="#1a1a1a"/>
<rect x="295" y="287" width="2" height="1" fill="#1a1a1a"/>
<rect x="293" y="293" width="4" height="1" fill="#1a1a1a"/>
<rect x="295" y="299" width="2" height="1" fill="#1a1a1a"/>
<rect x="295" y="305" width="2" height="1" fill="#1a1a1a"/>
<rect x="295" y="310" width="2" height="1" fill="#1a1a1a"/>
<rect x="295" y="316" width="2" height="1" fill="#1a1a1a"/>
<rect x="291" y="322" width="6" height="1" fill="#1a1a1a"/>
<rect x="295" y="328" width="2" height="1" fill="#1a1a1a"/>
<rect x="295" y="334" width="2" height="1" fill="#1a1a1a"/>
<rect x="295" y="340" width="2" height="1" fill="#1a1a1a"/>
<rect x="295" y="346" width="2" height="1" fill="#1a1a1a"/>
<rect x="293" y="352" width="4" height="1" fill="#1a1a1a"/>
<rect x="295" y="357" width="2" height="1" fill="#1a1a1a"/>
<rect x="295" y="363" width="2" height="1" fill="#1a1a1a"/>
<rect x="295" y="369" width="2" height="1" fill="#1a1a1a"/>
<rect x="295" y="375" width="2" height="1" fill="#1a1a1a"/>
<rect x="291" y="381" width="6" height="1" fill="#1a1a1a"/>
<rect x="295" y="387" width="2" height="1" fill="#1a1a1a"/>
<rect x="295" y="393" width="2" height="1" fill="#1a1a1a"/>
<rect x="295" y="398" width="2" height="1" fill="#1a1a1a"/>
<rect x="295" y="404" width="2" height="1" fill="#1a1a1a"/>
<rect x="293" y="410" width="4" height="1" fill="#1a1a1a"/>
<rect x="295" y="416" width="2" height="1" fill="#1a1a1a"/>
<rect x="295" y="422" width="2" height="1" fill="#1a1a1a"/>
<rect x="295" y="428" width="2" height="1" fill="#1a1a1a"/>
<rect x="295" y="434" width="2" height="1" fill="#1a1a1a"/>
<rect x="291" y="439" width="6" height="1" fill="#1a1a1a"/>
<rect x="295" y="445" width="2" height="1" fill="#1a1a1a"/>
<rect x="295" y="451" width="2" height="1" fill="#1a1a1a"/>
<rect x="295" y="457" width="2" height="1" fill="#1a1a1a"/>
<rect x="295" y="463" width="2" height="1" fill="#1a1a1a"/>
<rect x="293" y="469" width="4" height="1" fill="#1a1a1a"/>
<rect x="295" y="475" width="2" height="1" fill="#1a1a1a"/>
<rect x="295" y="480" width="2" height="1" fill="#1a1a1a"/>
<rect x="295" y="486" width="2" height="1" fill="#1a1a1a"/>
<rect x="295" y="492" width="2" height="1" fill="#1a1a1a"/>
<rect x="291" y="498" width="6" height="1" fill="#1a1a1a"/>
<rect x="295" y="504" width="2" height="1" fill="#1a1a1a"/>
<rect x="295" y="510" width="2" height="1" fill="#1a1a1a"/>
<rect x="295" y="516" width="2" height="1" fill="#1a1a1a"/>
<rect x="295" y="521" width="2" height="1" fill="#1a1a1a"/>
<rect x="293" y="527" width="4" height="1" fill="#1a1a1a"/>
<rect x="295" y="533" width="2" height="1" fill="#1a1a1a"/>
<rect x="295" y="539" width="2" height="1" fill="#1a1a1a"/>
<rect x="295" y="545" width="2" height="1" fill="#1a1a1a"/>
<rect x="295" y="551" width="2" height="1" fill="#1a1a1a"/>
<rect x="291" y="557" width="6" height="1" fill="#1a1a1a"/>
<rect x="295" y="562" width="2" height="1" fill="#1a1a1a"/>
<rect x="295" y="568" width="2" height="1" fill="#1a1a1a"/>
<rect x="295" y="574" width="2" height="1" fill="#1a1a1a"/>
<rect x="295" y="580" width="2" height="1" fill="#1a1a1a"/>
<rect x="293" y="586" width="4" height="1" fill="#1a1a1a"/>
<rect x="295" y="592" width="2" height="1" fill="#1a1a1a"/>
<rect x="295" y="598" width="2" height="1" fill="#1a1a1a"/>
<rect x="295" y="603" width="2" height="1" fill="#1a1a1a"/>
<rect x="295" y="609" width="2" height="1" fill="#1a1a1a"/>
<rect x="291" y="615" width="6" height="1" fill="#1a1a1a"/>
<rect x="295" y="621" width="2" height="1" fill="#1a1a1a"/>
<rect x="295" y="627" width="2" height="1" fill="#1a1a1a"/>
<rect x="295" y="633" width="2" height="1" fill="#1a1a1a"/>
<rect x="295" y="639" width="2" height="1" fill="#1a1a1a"/>
<rect x="293" y="645" width="4" height="1" fill="#1a1a1a"/>
<rect x="295" y="650" width="2" height="1" fill="#1a1a1a"/>
<rect x="295" y="656" width="2" height="1" fill="#1a1a1a"/>
<rect x="295" y="662" width="2" height="1" fill="#1a1a1a"/>
<rect x="295" y="668" width="2" height="1" fill="#1a1a1a"/>
<rect x="291" y="674" width="6" height="1" fill="#1a1a1a"/>
<rect x="295" y="680" width="2" height="1" fill="#1a1a1a"/>
</svg>
<div class="a rl" style="left:265px;top:141px;width:40px;height:12px;text-align:center;transform:rotate(-90deg)">200</div>
<div class="a rl" style="left:265px;top:200px;width:40px;height:12px;text-align:center;transform:rotate(-90deg)">0</div>
<div class="a rl" style="left:265px;top:258px;width:40px;height:12px;text-align:center;transform:rotate(-90deg)"><span class="hy">-</span>200</div>
<div class="a rl" style="left:265px;top:317px;width:40px;height:12px;text-align:center;transform:rotate(-90deg)"><span class="hy">-</span>400</div>
<div class="a rl" style="left:265px;top:375px;width:40px;height:12px;text-align:center;transform:rotate(-90deg)"><span class="hy">-</span>600</div>
<div class="a rl" style="left:265px;top:434px;width:40px;height:12px;text-align:center;transform:rotate(-90deg)"><span class="hy">-</span>800</div>
<div class="a rl" style="left:265px;top:492px;width:40px;height:12px;text-align:center;transform:rotate(-90deg)"><span class="hy">-</span>1000</div>
<div class="a rl" style="left:265px;top:551px;width:40px;height:12px;text-align:center;transform:rotate(-90deg)"><span class="hy">-</span>1200</div>
<div class="a rl" style="left:265px;top:610px;width:40px;height:12px;text-align:center;transform:rotate(-90deg)"><span class="hy">-</span>1400</div>
<div class="a" style="left:277px;top:685px;width:21px;height:17px;background:#f0f0f0;border-left:1px solid #fff;border-top:1px solid #8c8c8c;border-right:1px solid #8a8a8a;border-bottom:1px solid #8a8a8a"></div>
<svg style="left:282px;top:688px" width="10" height="10" viewBox="0 0 10 10"><path d="M1.5 1 V4 M1.5 6 V9" stroke="#000" stroke-width="1.2"/><path d="M4.5 0.5 V9.5 L9 5Z" fill="#000"/></svg>
<div class="a" style="left:1072px;top:112px;width:15px;height:556px;background:#cdcdcd"></div>
<svg style="left:1075px;top:100px" width="10" height="8" viewBox="0 0 10 8"><path d="M1.4 6.3 L5 2.2 L8.6 6.3" stroke="#505050" stroke-width="2.1" fill="none"/></svg>
<svg style="left:1075px;top:673px" width="10" height="8" viewBox="0 0 10 8"><path d="M1.4 1.7 L5 5.8 L8.6 1.7" stroke="#505050" stroke-width="2.1" fill="none"/></svg>
<div class="a" style="left:315px;top:686px;width:739px;height:15px;background:#cdcdcd"></div>
<svg style="left:302px;top:689px" width="8" height="10" viewBox="0 0 8 10"><path d="M6.5 1.2 L2.2 5 L6.5 8.8" stroke="#505050" stroke-width="2.1" fill="none"/></svg>
<svg style="left:1059px;top:689px" width="8" height="10" viewBox="0 0 8 10"><path d="M1.5 1.2 L5.8 5 L1.5 8.8" stroke="#505050" stroke-width="2.1" fill="none"/></svg>
<div class="a" style="left:534px;top:125px;width:298px;height:529px;background:#ffff80;border:1px solid #000"></div>
<!--RELIEF-->
<div class="a" style="left:277px;top:706px;width:812px;height:1px;background:#a0a0a0"></div>
<div class="a" style="left:277px;top:706px;width:1px;height:41px;background:#a0a0a0"></div>
<div class="a" style="left:277px;top:746px;width:812px;height:1px;background:#fff"></div>
<div class="a" style="left:298px;top:723px;width:25px;height:20px;background:#000;box-shadow:1px 1px 0 #666"></div>
<div class="a" style="left:283px;top:711px;width:25px;height:20px;background:#fff;border:1px solid #000;box-shadow:1px 1px 0 #888"></div>
<svg style="left:311px;top:712px" width="13" height="10" viewBox="0 0 13 10"><rect x="0.7" y="0.7" width="7.5" height="5" rx="2.2" fill="none" stroke="#000" stroke-width="1.1"/><rect x="4.5" y="3.8" width="7.5" height="5" rx="2.2" fill="none" stroke="#000" stroke-width="1.1"/></svg>
<div class="sw" style="left:333px;background:#ffffff"></div>
<div class="sw" style="left:368px;background:#000000"></div>
<div class="sw" style="left:403px;background:#00ffff"></div>
<div class="sw" style="left:438px;background:#3040e0"></div>
<div class="sw" style="left:473px;background:#5cb854"></div>
<div class="sw" style="left:508px;background:#d81024"></div>
<div class="sw" style="left:543px;background:#a030e0"></div>
<div class="sw" style="left:578px;background:#ffff80"></div>
<div class="sw" style="left:613px;background:#b0a034"></div>
<div class="sw" style="left:648px;background:#fccc18"></div>
<div class="sw" style="left:683px;background:#060606"></div>
<div class="sw" style="left:718px;background:#060606"></div>
<div class="sw" style="left:753px;background:#060606"></div>
<div class="sw" style="left:788px;background:#060606"></div>
<div class="sw" style="left:823px;background:#060606"></div>
<div class="sw" style="left:858px;background:#060606"></div>
<div class="sw" style="left:893px;background:#060606"></div>
<div class="sw" style="left:928px;background:#060606"></div>
<div class="sw" style="left:963px;background:#060606"></div>
<div class="sw" style="left:998px;background:#060606"></div>
<div class="sw" style="left:1033px;background:#060606"></div>
<svg style="left:1074px;top:712px" width="10" height="8" viewBox="0 0 10 8"><path d="M1.4 6.3 L5 2.2 L8.6 6.3" stroke="#505050" stroke-width="2.1" fill="none"/></svg>
<svg style="left:1074px;top:735px" width="10" height="8" viewBox="0 0 10 8"><path d="M1.4 1.7 L5 5.8 L8.6 1.7" stroke="#505050" stroke-width="2.1" fill="none"/></svg>
<svg style="left:534px;top:125px" width="298" height="529" viewBox="534 125 298 529">
<defs>
<radialGradient id="rFan" gradientUnits="userSpaceOnUse" cx="686" cy="222" r="47"><stop offset="0.55" stop-color="#5c5c5c"/><stop offset="0.8" stop-color="#989898"/><stop offset="1" stop-color="#c2c2c2"/></radialGradient>
<radialGradient id="rSph" cx="0.42" cy="0.38" r="0.7"><stop offset="0" stop-color="#ffffff"/><stop offset="0.55" stop-color="#c8c8c8"/><stop offset="1" stop-color="#707070"/></radialGradient>
<radialGradient id="rFlow" cx="0.5" cy="0.5" r="0.5"><stop offset="0.3" stop-color="#2e2e2e"/><stop offset="0.75" stop-color="#6e6e6e"/><stop offset="1" stop-color="#a8a8a8"/></radialGradient>
<linearGradient id="lTas" x1="0" y1="0" x2="1" y2="0"><stop offset="0" stop-color="#909090"/><stop offset="0.2" stop-color="#d4d4d4"/><stop offset="0.35" stop-color="#8c8c8c"/><stop offset="0.5" stop-color="#e0e0e0"/><stop offset="0.65" stop-color="#8c8c8c"/><stop offset="0.8" stop-color="#d4d4d4"/><stop offset="1" stop-color="#909090"/></linearGradient>
<linearGradient id="lCab" x1="0" y1="0" x2="1" y2="0"><stop offset="0" stop-color="#d4d4d4"/><stop offset="0.45" stop-color="#6c6c6c"/><stop offset="1" stop-color="#909090"/></linearGradient>
<linearGradient id="lShell" x1="0" y1="0" x2="0" y2="1"><stop offset="0" stop-color="#b4b4b4"/><stop offset="1" stop-color="#686868"/></linearGradient>
<linearGradient id="lLeaf" x1="0" y1="0" x2="1" y2="1"><stop offset="0" stop-color="#dcdcdc"/><stop offset="1" stop-color="#8a8a8a"/></linearGradient>
</defs>
<path d="M621.8 566 L621.8 193.5 C634 191.5 644 187.5 652 180.5 C660 173.5 665 169.5 673 169.5 L699 169.5 C707 169.5 712 173.5 720 180.5 C728 187.5 738 191.5 750.3 193.5 L750.3 566 L732.5 578.3 L639.5 578.3 Z" fill="none" stroke="#6a6a6a" stroke-width="4.6" stroke-linejoin="miter"/><path d="M621.8 566 L621.8 193.5 C634 191.5 644 187.5 652 180.5 C660 173.5 665 169.5 673 169.5 L699 169.5 C707 169.5 712 173.5 720 180.5 C728 187.5 738 191.5 750.3 193.5 L750.3 566 L732.5 578.3 L639.5 578.3 Z" fill="none" stroke="#b8b8b8" stroke-width="2.9" stroke-linejoin="miter"/><path d="M621.8 566 L621.8 193.5 C634 191.5 644 187.5 652 180.5 C660 173.5 665 169.5 673 169.5 L699 169.5 C707 169.5 712 173.5 720 180.5 C728 187.5 738 191.5 750.3 193.5 L750.3 566 L732.5 578.3 L639.5 578.3 Z" fill="none" stroke="#e6e6e6" stroke-width="1.2" stroke-linejoin="miter"/>
<circle cx="621.8" cy="215.0" r="2.5" fill="url(#rSph)" stroke="#7a7a7a" stroke-width=".5"/>
<circle cx="750.3" cy="215.0" r="2.5" fill="url(#rSph)" stroke="#7a7a7a" stroke-width=".5"/>
<circle cx="621.8" cy="221.2" r="2.5" fill="url(#rSph)" stroke="#7a7a7a" stroke-width=".5"/>
<circle cx="750.3" cy="221.2" r="2.5" fill="url(#rSph)" stroke="#7a7a7a" stroke-width=".5"/>
<circle cx="621.8" cy="227.4" r="2.5" fill="url(#rSph)" stroke="#7a7a7a" stroke-width=".5"/>
<circle cx="750.3" cy="227.4" r="2.5" fill="url(#rSph)" stroke="#7a7a7a" stroke-width=".5"/>
<circle cx="621.8" cy="522.0" r="2.5" fill="url(#rSph)" stroke="#7a7a7a" stroke-width=".5"/>
<circle cx="750.3" cy="522.0" r="2.5" fill="url(#rSph)" stroke="#7a7a7a" stroke-width=".5"/>
<circle cx="621.8" cy="528.5" r="2.5" fill="url(#rSph)" stroke="#7a7a7a" stroke-width=".5"/>
<circle cx="750.3" cy="528.5" r="2.5" fill="url(#rSph)" stroke="#7a7a7a" stroke-width=".5"/>
<circle cx="621.8" cy="535.0" r="2.5" fill="url(#rSph)" stroke="#7a7a7a" stroke-width=".5"/>
<circle cx="750.3" cy="535.0" r="2.5" fill="url(#rSph)" stroke="#7a7a7a" stroke-width=".5"/>
<circle cx="679.6" cy="169.4" r="2.5" fill="url(#rSph)" stroke="#7a7a7a" stroke-width=".5"/>
<circle cx="686.0" cy="169.4" r="2.5" fill="url(#rSph)" stroke="#7a7a7a" stroke-width=".5"/>
<circle cx="692.4" cy="169.4" r="2.5" fill="url(#rSph)" stroke="#7a7a7a" stroke-width=".5"/>
<circle cx="676.4" cy="578.3" r="2.3" fill="url(#rSph)" stroke="#7a7a7a" stroke-width=".5"/>
<circle cx="682.6" cy="578.3" r="2.3" fill="url(#rSph)" stroke="#7a7a7a" stroke-width=".5"/>
<circle cx="688.8" cy="578.3" r="2.3" fill="url(#rSph)" stroke="#7a7a7a" stroke-width=".5"/>
<circle cx="695.0" cy="578.3" r="2.3" fill="url(#rSph)" stroke="#7a7a7a" stroke-width=".5"/>
<ellipse cx="686" cy="296.5" rx="42" ry="69" fill="none" stroke="#767676" stroke-width="14.4"/>
<ellipse cx="686" cy="296.5" rx="42" ry="69" fill="none" stroke="#b2b2b2" stroke-width="12.4" stroke-dasharray="7 1.1"/>
<ellipse cx="686" cy="296.5" rx="42" ry="69" fill="none" stroke="#c6c6c6" stroke-width="6.5" stroke-dasharray="5 3.1" stroke-dashoffset="-1"/>
<ellipse cx="686" cy="296.5" rx="48.8" ry="75.8" fill="none" stroke="#5a5a5a" stroke-width="1.2" stroke-dasharray="1.1 1.3"/>
<ellipse cx="686" cy="296.5" rx="36" ry="63.4" fill="none" stroke="#666" stroke-width="1" stroke-dasharray="1.1 1.4"/>
<ellipse cx="686" cy="296.5" rx="32.2" ry="60.2" fill="#ffff80" stroke="#6a6a6a" stroke-width="5.4"/>
<ellipse cx="686" cy="296.5" rx="32.2" ry="60.2" fill="none" stroke="#bababa" stroke-width="4"/>
<ellipse cx="686" cy="296.5" rx="32.2" ry="60.2" fill="none" stroke="#ececec" stroke-width="1.7"/>
<path d="M662.5 216.1 L646.8 212.9 Q639.6 203.7 651.0 201.5 L665.0 209.3 Z" fill="url(#rFan)" stroke="#646464" stroke-width=".8" stroke-linejoin="round"/><path d="M665.0 209.3 L651.0 201.5 Q646.9 190.7 658.5 192.0 L669.5 203.6 Z" fill="url(#rFan)" stroke="#646464" stroke-width=".8" stroke-linejoin="round"/><path d="M669.5 203.6 L658.5 192.0 Q657.7 180.4 668.4 185.1 L675.4 199.4 Z" fill="url(#rFan)" stroke="#646464" stroke-width=".8" stroke-linejoin="round"/><path d="M675.4 199.4 L668.4 185.1 Q671.2 173.8 679.9 181.5 L682.4 197.3 Z" fill="url(#rFan)" stroke="#646464" stroke-width=".8" stroke-linejoin="round"/><path d="M682.4 197.3 L679.9 181.5 Q686.0 171.5 692.1 181.5 L689.6 197.3 Z" fill="url(#rFan)" stroke="#646464" stroke-width=".8" stroke-linejoin="round"/><path d="M689.6 197.3 L692.1 181.5 Q700.8 173.8 703.6 185.1 L696.6 199.4 Z" fill="url(#rFan)" stroke="#646464" stroke-width=".8" stroke-linejoin="round"/><path d="M696.6 199.4 L703.6 185.1 Q714.3 180.4 713.5 192.0 L702.5 203.6 Z" fill="url(#rFan)" stroke="#646464" stroke-width=".8" stroke-linejoin="round"/><path d="M702.5 203.6 L713.5 192.0 Q725.1 190.7 721.0 201.5 L707.0 209.3 Z" fill="url(#rFan)" stroke="#646464" stroke-width=".8" stroke-linejoin="round"/><path d="M707.0 209.3 L721.0 201.5 Q732.4 203.7 725.2 212.9 L709.5 216.1 Z" fill="url(#rFan)" stroke="#646464" stroke-width=".8" stroke-linejoin="round"/><path d="M657.5 223 C657.5 186 714.5 186 714.5 223Z" fill="#ffff80"/><circle cx="656.3" cy="215.6" r="2.2" fill="url(#rSph)" stroke="#7a7a7a" stroke-width=".5"/><circle cx="657.8" cy="211.1" r="2.2" fill="url(#rSph)" stroke="#7a7a7a" stroke-width=".5"/><circle cx="660.1" cy="206.8" r="2.2" fill="url(#rSph)" stroke="#7a7a7a" stroke-width=".5"/><circle cx="663.1" cy="202.9" r="2.2" fill="url(#rSph)" stroke="#7a7a7a" stroke-width=".5"/><circle cx="666.9" cy="199.6" r="2.2" fill="url(#rSph)" stroke="#7a7a7a" stroke-width=".5"/><circle cx="671.1" cy="196.9" r="2.2" fill="url(#rSph)" stroke="#7a7a7a" stroke-width=".5"/><circle cx="675.9" cy="194.9" r="2.2" fill="url(#rSph)" stroke="#7a7a7a" stroke-width=".5"/><circle cx="680.9" cy="193.7" r="2.2" fill="url(#rSph)" stroke="#7a7a7a" stroke-width=".5"/><circle cx="686.0" cy="193.3" r="2.2" fill="url(#rSph)" stroke="#7a7a7a" stroke-width=".5"/><circle cx="691.1" cy="193.7" r="2.2" fill="url(#rSph)" stroke="#7a7a7a" stroke-width=".5"/><circle cx="696.1" cy="194.9" r="2.2" fill="url(#rSph)" stroke="#7a7a7a" stroke-width=".5"/><circle cx="700.9" cy="196.9" r="2.2" fill="url(#rSph)" stroke="#7a7a7a" stroke-width=".5"/><circle cx="705.1" cy="199.6" r="2.2" fill="url(#rSph)" stroke="#7a7a7a" stroke-width=".5"/><circle cx="708.9" cy="202.9" r="2.2" fill="url(#rSph)" stroke="#7a7a7a" stroke-width=".5"/><circle cx="711.9" cy="206.8" r="2.2" fill="url(#rSph)" stroke="#7a7a7a" stroke-width=".5"/><circle cx="714.2" cy="211.1" r="2.2" fill="url(#rSph)" stroke="#7a7a7a" stroke-width=".5"/><circle cx="715.7" cy="215.6" r="2.2" fill="url(#rSph)" stroke="#7a7a7a" stroke-width=".5"/><path d="M660.6 220 C660.6 192 711.4 192 711.4 220" fill="none" stroke="#6a6a6a" stroke-width="4.8" stroke-linecap="round"/><path d="M660.6 220 C660.6 192 711.4 192 711.4 220" fill="none" stroke="#b8b8b8" stroke-width="3.1" stroke-linecap="round"/><path d="M660.6 220 C660.6 192 711.4 192 711.4 220" fill="none" stroke="#e6e6e6" stroke-width="1.3" stroke-linecap="round"/><path d="M676 223.5 C667 222 662.5 214.5 668 210 C672 207.5 676.5 211 678 216Z" fill="url(#lShell)" stroke="#666" stroke-width=".7"/><path d="M696 223.5 C705 222 709.5 214.5 704 210 C700 207.5 695.5 211 694 216Z" fill="url(#lShell)" stroke="#666" stroke-width=".7"/><path d="M678.5 224 C675.5 214 676.5 204.5 682 204.5 C684 204.5 685 205.5 686 207 C687 205.5 688 204.5 690 204.5 C695.5 204.5 696.5 214 693.5 224Z" fill="url(#lShell)" stroke="#666" stroke-width=".7"/><circle cx="666.6" cy="221.0" r="3.0" fill="url(#rSph)" stroke="#7a7a7a" stroke-width=".5"/><circle cx="705.4" cy="221.0" r="3.0" fill="url(#rSph)" stroke="#7a7a7a" stroke-width=".5"/>
<g id="rl"><path d="M635.5 200.5 C630 198.5 627.5 205 632 207.5 C636 210 633 214 631 218" fill="none" stroke="#6a6a6a" stroke-width="3.0" stroke-linecap="round"/><path d="M635.5 200.5 C630 198.5 627.5 205 632 207.5 C636 210 633 214 631 218" fill="none" stroke="#b8b8b8" stroke-width="1.3" stroke-linecap="round"/><path d="M635.5 200.5 C630 198.5 627.5 205 632 207.5 C636 210 633 214 631 218" fill="none" stroke="#e6e6e6" stroke-width="0.5" stroke-linecap="round"/><path d="M630.5 211 C627 216 627.5 223 631.5 226 C629.5 229.5 630.5 234 633.5 237 C636.5 233 637.5 228 635 224 C638 220.5 637 214.5 634 211.5 C633 213 631.5 212.5 630.5 211Z" fill="url(#lLeaf)" stroke="#6a6a6a" stroke-width=".8" stroke-linejoin="round"/><circle cx="635.5" cy="201.0" r="2.4" fill="url(#rSph)" stroke="#7a7a7a" stroke-width=".5"/><circle cx="631.5" cy="220.5" r="1.8" fill="url(#rSph)" stroke="#7a7a7a" stroke-width=".5"/><path d="M661 231 C654 238 643 233 643.5 223.5 C644 214.5 656.5 213.5 658 221.5 C659 227.5 652.5 230 650.5 226" fill="none" stroke="#6a6a6a" stroke-width="4.2" stroke-linecap="round"/><path d="M661 231 C654 238 643 233 643.5 223.5 C644 214.5 656.5 213.5 658 221.5 C659 227.5 652.5 230 650.5 226" fill="none" stroke="#b8b8b8" stroke-width="2.5" stroke-linecap="round"/><path d="M661 231 C654 238 643 233 643.5 223.5 C644 214.5 656.5 213.5 658 221.5 C659 227.5 652.5 230 650.5 226" fill="none" stroke="#e6e6e6" stroke-width="1.1" stroke-linecap="round"/><circle cx="645.8" cy="222.3" r="2.0" fill="url(#rSph)" stroke="#7a7a7a" stroke-width=".5"/><path d="M640 238 C644 234 650 233 655 235 C651 239 646 242 641 242Z" fill="url(#lLeaf)" stroke="#6a6a6a" stroke-width=".8" stroke-linejoin="round"/><path d="M658 234.5 C650 241 639.5 250 636 262 C634 268 633.5 273 633.5 278" fill="none" stroke="#6a6a6a" stroke-width="5.4" stroke-linecap="round"/><path d="M658 234.5 C650 241 639.5 250 636 262 C634 268 633.5 273 633.5 278" fill="none" stroke="#b8b8b8" stroke-width="3.7" stroke-linecap="round"/><path d="M658 234.5 C650 241 639.5 250 636 262 C634 268 633.5 273 633.5 278" fill="none" stroke="#e6e6e6" stroke-width="1.6" stroke-linecap="round"/><path d="M634 272.5 C628.5 286 628.5 304 634.5 319 C639 314 640.5 306 640 295.5 C639.8 285 638 277 634 272.5Z" fill="url(#lCab)" stroke="#666" stroke-width=".8"/><circle cx="625.6" cy="276.0" r="0.9" fill="#dedede" stroke="#8a8a8a" stroke-width=".4"/><circle cx="627.8" cy="276.0" r="0.9" fill="#dedede" stroke="#8a8a8a" stroke-width=".4"/><circle cx="626.4" cy="280.4" r="0.9" fill="#dedede" stroke="#8a8a8a" stroke-width=".4"/><circle cx="628.6" cy="280.4" r="0.9" fill="#dedede" stroke="#8a8a8a" stroke-width=".4"/><circle cx="625.6" cy="284.8" r="0.9" fill="#dedede" stroke="#8a8a8a" stroke-width=".4"/><circle cx="627.8" cy="284.8" r="0.9" fill="#dedede" stroke="#8a8a8a" stroke-width=".4"/><circle cx="626.4" cy="289.2" r="0.9" fill="#dedede" stroke="#8a8a8a" stroke-width=".4"/><circle cx="628.6" cy="289.2" r="0.9" fill="#dedede" stroke="#8a8a8a" stroke-width=".4"/><circle cx="625.6" cy="293.6" r="0.9" fill="#dedede" stroke="#8a8a8a" stroke-width=".4"/><circle cx="627.8" cy="293.6" r="0.9" fill="#dedede" stroke="#8a8a8a" stroke-width=".4"/><circle cx="626.4" cy="298.0" r="0.9" fill="#dedede" stroke="#8a8a8a" stroke-width=".4"/><circle cx="628.6" cy="298.0" r="0.9" fill="#dedede" stroke="#8a8a8a" stroke-width=".4"/><circle cx="625.6" cy="302.4" r="0.9" fill="#dedede" stroke="#8a8a8a" stroke-width=".4"/><circle cx="627.8" cy="302.4" r="0.9" fill="#dedede" stroke="#8a8a8a" stroke-width=".4"/><circle cx="626.4" cy="306.8" r="0.9" fill="#dedede" stroke="#8a8a8a" stroke-width=".4"/><circle cx="628.6" cy="306.8" r="0.9" fill="#dedede" stroke="#8a8a8a" stroke-width=".4"/><circle cx="625.6" cy="311.2" r="0.9" fill="#dedede" stroke="#8a8a8a" stroke-width=".4"/><circle cx="627.8" cy="311.2" r="0.9" fill="#dedede" stroke="#8a8a8a" stroke-width=".4"/><circle cx="626.4" cy="315.6" r="0.9" fill="#dedede" stroke="#8a8a8a" stroke-width=".4"/><circle cx="628.6" cy="315.6" r="0.9" fill="#dedede" stroke="#8a8a8a" stroke-width=".4"/><path d="M635.5 320 C632 327 637.5 332 638.5 340 C639.5 348 631.5 351 632.5 359 C633.5 368 647 369.5 651 362 C654.5 355 647 350.5 643 355.5" fill="none" stroke="#6a6a6a" stroke-width="4.4" stroke-linecap="round"/><path d="M635.5 320 C632 327 637.5 332 638.5 340 C639.5 348 631.5 351 632.5 359 C633.5 368 647 369.5 651 362 C654.5 355 647 350.5 643 355.5" fill="none" stroke="#b8b8b8" stroke-width="2.7" stroke-linecap="round"/><path d="M635.5 320 C632 327 637.5 332 638.5 340 C639.5 348 631.5 351 632.5 359 C633.5 368 647 369.5 651 362 C654.5 355 647 350.5 643 355.5" fill="none" stroke="#e6e6e6" stroke-width="1.1" stroke-linecap="round"/><path d="M637 325 C632 331 631 339 634.5 346 C638.5 341 641 335 640 329Z" fill="url(#lLeaf)" stroke="#6a6a6a" stroke-width=".8" stroke-linejoin="round"/><path d="M640.5 339 C646 343 650 349 649.5 356 C644.5 353 640.5 349 640 343Z" fill="url(#lLeaf)" stroke="#6a6a6a" stroke-width=".8" stroke-linejoin="round"/><path d="M627.5 364 C631.5 367 637 369.5 643 369 L639.5 365.5 C635.5 365.5 631 364.5 627.5 361.5Z" fill="url(#lLeaf)" stroke="#6a6a6a" stroke-width=".8" stroke-linejoin="round"/><path d="M668 383.5 L655 383.5 C648 372.5 630 372.5 630.5 383.5 C631 391 640 391.5 641 386" fill="none" stroke="#6a6a6a" stroke-width="7.6" stroke-linecap="round"/><path d="M668 383.5 L655 383.5 C648 372.5 630 372.5 630.5 383.5 C631 391 640 391.5 641 386" fill="none" stroke="#b8b8b8" stroke-width="5.9" stroke-linecap="round"/><path d="M668 383.5 L655 383.5 C648 372.5 630 372.5 630.5 383.5 C631 391 640 391.5 641 386" fill="none" stroke="#e6e6e6" stroke-width="2.5" stroke-linecap="round"/><path d="M668 390.5 L651 390.5" fill="none" stroke="#6a6a6a" stroke-width="2.0" stroke-linecap="round"/><path d="M668 390.5 L651 390.5" fill="none" stroke="#b8b8b8" stroke-width="0.6" stroke-linecap="round"/><circle cx="639.0" cy="387.0" r="2.2" fill="url(#rSph)" stroke="#7a7a7a" stroke-width=".5"/><circle cx="639.5" cy="393.0" r="1.45" fill="#d6d6d6" stroke="#7c7c7c" stroke-width=".5"/><circle cx="642.0" cy="396.2" r="1.45" fill="#d6d6d6" stroke="#7c7c7c" stroke-width=".5"/><circle cx="644.5" cy="399.0" r="1.45" fill="#d6d6d6" stroke="#7c7c7c" stroke-width=".5"/><circle cx="647.0" cy="401.4" r="1.45" fill="#d6d6d6" stroke="#7c7c7c" stroke-width=".5"/><circle cx="649.6" cy="403.4" r="1.45" fill="#d6d6d6" stroke="#7c7c7c" stroke-width=".5"/><circle cx="652.2" cy="405.1" r="1.45" fill="#d6d6d6" stroke="#7c7c7c" stroke-width=".5"/><circle cx="654.8" cy="406.4" r="1.45" fill="#d6d6d6" stroke="#7c7c7c" stroke-width=".5"/><circle cx="657.5" cy="407.2" r="1.45" fill="#d6d6d6" stroke="#7c7c7c" stroke-width=".5"/><circle cx="660.2" cy="407.8" r="1.45" fill="#d6d6d6" stroke="#7c7c7c" stroke-width=".5"/><circle cx="663.0" cy="407.9" r="1.45" fill="#d6d6d6" stroke="#7c7c7c" stroke-width=".5"/><circle cx="665.8" cy="407.6" r="1.45" fill="#d6d6d6" stroke="#7c7c7c" stroke-width=".5"/><circle cx="668.7" cy="407.0" r="1.45" fill="#d6d6d6" stroke="#7c7c7c" stroke-width=".5"/><circle cx="671.6" cy="405.9" r="1.45" fill="#d6d6d6" stroke="#7c7c7c" stroke-width=".5"/><circle cx="674.5" cy="404.5" r="1.45" fill="#d6d6d6" stroke="#7c7c7c" stroke-width=".5"/><circle cx="677.5" cy="402.7" r="1.45" fill="#d6d6d6" stroke="#7c7c7c" stroke-width=".5"/><circle cx="680.5" cy="400.6" r="1.45" fill="#d6d6d6" stroke="#7c7c7c" stroke-width=".5"/><circle cx="683.5" cy="398.0" r="1.45" fill="#d6d6d6" stroke="#7c7c7c" stroke-width=".5"/><circle cx="638.5" cy="397.0" r="1.45" fill="#d6d6d6" stroke="#7c7c7c" stroke-width=".5"/><circle cx="640.5" cy="400.2" r="1.45" fill="#d6d6d6" stroke="#7c7c7c" stroke-width=".5"/><circle cx="642.5" cy="403.2" r="1.45" fill="#d6d6d6" stroke="#7c7c7c" stroke-width=".5"/><circle cx="644.5" cy="405.8" r="1.45" fill="#d6d6d6" stroke="#7c7c7c" stroke-width=".5"/><circle cx="646.6" cy="408.2" r="1.45" fill="#d6d6d6" stroke="#7c7c7c" stroke-width=".5"/><circle cx="648.7" cy="410.2" r="1.45" fill="#d6d6d6" stroke="#7c7c7c" stroke-width=".5"/><circle cx="650.8" cy="411.9" r="1.45" fill="#d6d6d6" stroke="#7c7c7c" stroke-width=".5"/><circle cx="652.9" cy="413.3" r="1.45" fill="#d6d6d6" stroke="#7c7c7c" stroke-width=".5"/><circle cx="655.1" cy="414.4" r="1.45" fill="#d6d6d6" stroke="#7c7c7c" stroke-width=".5"/><circle cx="657.4" cy="415.2" r="1.45" fill="#d6d6d6" stroke="#7c7c7c" stroke-width=".5"/><circle cx="659.6" cy="415.8" r="1.45" fill="#d6d6d6" stroke="#7c7c7c" stroke-width=".5"/><circle cx="661.9" cy="415.9" r="1.45" fill="#d6d6d6" stroke="#7c7c7c" stroke-width=".5"/><circle cx="664.2" cy="415.8" r="1.45" fill="#d6d6d6" stroke="#7c7c7c" stroke-width=".5"/><circle cx="666.6" cy="415.4" r="1.45" fill="#d6d6d6" stroke="#7c7c7c" stroke-width=".5"/><circle cx="669.0" cy="414.7" r="1.45" fill="#d6d6d6" stroke="#7c7c7c" stroke-width=".5"/><circle cx="671.4" cy="413.7" r="1.45" fill="#d6d6d6" stroke="#7c7c7c" stroke-width=".5"/><circle cx="673.9" cy="412.4" r="1.45" fill="#d6d6d6" stroke="#7c7c7c" stroke-width=".5"/><circle cx="676.3" cy="410.7" r="1.45" fill="#d6d6d6" stroke="#7c7c7c" stroke-width=".5"/><circle cx="678.9" cy="408.8" r="1.45" fill="#d6d6d6" stroke="#7c7c7c" stroke-width=".5"/><circle cx="681.4" cy="406.5" r="1.45" fill="#d6d6d6" stroke="#7c7c7c" stroke-width=".5"/><circle cx="684.0" cy="404.0" r="1.45" fill="#d6d6d6" stroke="#7c7c7c" stroke-width=".5"/><path d="M636.5 389 L638 428" fill="none" stroke="#6a6a6a" stroke-width="2.6" stroke-linecap="round"/><path d="M636.5 389 L638 428" fill="none" stroke="#b8b8b8" stroke-width="0.9" stroke-linecap="round"/><path d="M636.5 389 L638 428" fill="none" stroke="#e6e6e6" stroke-width="0.4" stroke-linecap="round"/><path d="M633.8 398 L633.4 422" fill="none" stroke="#6a6a6a" stroke-width="1.8" stroke-linecap="round"/><path d="M633.8 398 L633.4 422" fill="none" stroke="#b8b8b8" stroke-width="0.6" stroke-linecap="round"/><circle cx="637.4" cy="432.0" r="1.6" fill="url(#rSph)" stroke="#7a7a7a" stroke-width=".5"/><circle cx="637.4" cy="436.0" r="1.6" fill="url(#rSph)" stroke="#7a7a7a" stroke-width=".5"/><circle cx="637.4" cy="440.0" r="1.6" fill="url(#rSph)" stroke="#7a7a7a" stroke-width=".5"/><circle cx="633.4" cy="425.0" r="1.3" fill="url(#rSph)" stroke="#7a7a7a" stroke-width=".5"/><path d="M654.5 437 C651 430 661 425.5 665.5 432 C669.5 438 664 446 657.5 451 C648 458 639 466 637.5 480 C636 496 651 506 660 517 C670 529 672 547 664 558.5 C654 572 632 569.5 630 553 C628.5 541 640 533.5 648 538 C654 541.5 652.5 549 647.5 549" fill="none" stroke="#6a6a6a" stroke-width="5.0" stroke-linecap="round"/><path d="M654.5 437 C651 430 661 425.5 665.5 432 C669.5 438 664 446 657.5 451 C648 458 639 466 637.5 480 C636 496 651 506 660 517 C670 529 672 547 664 558.5 C654 572 632 569.5 630 553 C628.5 541 640 533.5 648 538 C654 541.5 652.5 549 647.5 549" fill="none" stroke="#b8b8b8" stroke-width="3.3" stroke-linecap="round"/><path d="M654.5 437 C651 430 661 425.5 665.5 432 C669.5 438 664 446 657.5 451 C648 458 639 466 637.5 480 C636 496 651 506 660 517 C670 529 672 547 664 558.5 C654 572 632 569.5 630 553 C628.5 541 640 533.5 648 538 C654 541.5 652.5 549 647.5 549" fill="none" stroke="#e6e6e6" stroke-width="1.4" stroke-linecap="round"/><path d="M653.5 439.5 C648 442 644.5 446.5 644.5 452 C648 452.5 651.5 450 653 447 C654 444.5 654 442 653.5 439.5Z" fill="url(#lLeaf)" stroke="#6a6a6a" stroke-width=".8" stroke-linejoin="round"/><path d="M660 449 C664 449.5 668 452 669.5 455.5 C666 457 661 456 658.5 453Z" fill="url(#lLeaf)" stroke="#6a6a6a" stroke-width=".8" stroke-linejoin="round"/><path d="M652.5 456.5 C660 452.5 668.5 458 667.5 467 C667 475 659 479.5 654.8 474.5" fill="none" stroke="#6a6a6a" stroke-width="4.0" stroke-linecap="round"/><path d="M652.5 456.5 C660 452.5 668.5 458 667.5 467 C667 475 659 479.5 654.8 474.5" fill="none" stroke="#b8b8b8" stroke-width="2.3" stroke-linecap="round"/><path d="M652.5 456.5 C660 452.5 668.5 458 667.5 467 C667 475 659 479.5 654.8 474.5" fill="none" stroke="#e6e6e6" stroke-width="1.0" stroke-linecap="round"/><circle cx="654.2" cy="472.4" r="3.4" fill="url(#rSph)" stroke="#7a7a7a" stroke-width=".5"/><path d="M660.5 476 L664.5 482 L662.5 484 L664 489 L660 486.5 L657 490 L656 485 L652.5 484.5 L656.5 480Z" fill="url(#lLeaf)" stroke="#6a6a6a" stroke-width=".8" stroke-linejoin="round"/><path d="M646.5 470 C643 475 642.5 481 645 486 C648.5 483 650 478 649 473Z" fill="url(#lLeaf)" stroke="#6a6a6a" stroke-width=".8" stroke-linejoin="round"/><path d="M630.7 497 C636 495.5 641.5 497.5 645 502 C641 505 641.5 510 638 514 C636.5 510.5 633 511.5 631 508.5 C633.5 506.5 633 504 630 503 C632 501 632.5 499 630.7 497Z" fill="url(#lLeaf)" stroke="#6a6a6a" stroke-width=".8" stroke-linejoin="round"/><path d="M663.5 501 C668 505 668 511 665 515 C662.5 511.5 659.5 511 658 507.5 C661 507 663.5 504.5 663.5 501Z" fill="url(#lLeaf)" stroke="#6a6a6a" stroke-width=".8" stroke-linejoin="round"/><path d="M634.5 522 C641 520.5 648 524 651 531 C646 531.5 643 536 637.5 535 C640 531 638 526 634.5 522Z" fill="url(#lLeaf)" stroke="#6a6a6a" stroke-width=".8" stroke-linejoin="round"/><path d="M657 533 C663.5 536.5 666 543 663.5 549 C660 546 656.5 545.5 655 541.5 C658 540 658.5 536.5 657 533Z" fill="url(#lLeaf)" stroke="#6a6a6a" stroke-width=".8" stroke-linejoin="round"/><path d="M647.5 547 C651 550 653.5 555 652.5 560 L649.5 559 L649 565.5 L646 561 L643 565 L642.5 559 L639.5 560 C640 554 643 549 647.5 547Z" fill="url(#lLeaf)" stroke="#6a6a6a" stroke-width=".8" stroke-linejoin="round"/><path d="M647.5 549 L646.3 564" stroke="#7a7a7a" stroke-width=".8"/></g>
<use href="#rl" transform="translate(1372 0) scale(-1 1)"/>
<g id="rin"><path d="M670 281 C676 288 680.5 296 682 308" fill="none" stroke="#6a6a6a" stroke-width="3.0" stroke-linecap="round"/><path d="M670 281 C676 288 680.5 296 682 308" fill="none" stroke="#b8b8b8" stroke-width="1.3" stroke-linecap="round"/><path d="M670 281 C676 288 680.5 296 682 308" fill="none" stroke="#e6e6e6" stroke-width="0.5" stroke-linecap="round"/><path d="M674 301 C679 301 682 306 682.5 314" fill="none" stroke="#6a6a6a" stroke-width="2.6" stroke-linecap="round"/><path d="M674 301 C679 301 682 306 682.5 314" fill="none" stroke="#b8b8b8" stroke-width="0.9" stroke-linecap="round"/><path d="M674 301 C679 301 682 306 682.5 314" fill="none" stroke="#e6e6e6" stroke-width="0.4" stroke-linecap="round"/><path d="M658.5 267.5 L666 270.5 L669.5 262.5 L673 270 L681.5 269.5 L675 275.5 L677.5 283 L670.5 279.5 L665 285 L665 277 L657.5 274.5 L663 271.5Z" fill="#bdbdbd" stroke="#646464" stroke-width=".9" stroke-linejoin="round"/><path d="M658.5 259.5 C661.5 256.5 667 256.5 671 259 C672.5 263 671.5 268 668.5 271.5 C664 271 660 268 658.8 264Z" fill="#8c8c8c" stroke="#5a5a5a" stroke-width=".9"/><circle cx="666.2" cy="263.6" r="2.6" fill="url(#rSph)" stroke="#7a7a7a" stroke-width=".5"/><circle cx="666.4" cy="300.8" r="8.8" fill="#868686" stroke="#585858" stroke-width="1.4" stroke-dasharray="2.2 1"/><circle cx="666.4" cy="300.8" r="5.4" fill="#b8b8b8" stroke="#6a6a6a" stroke-width=".6"/><circle cx="667" cy="301.2" r="3.2" fill="url(#rSph)"/><path d="M663 305 C660.5 312 661.5 320 663.2 326.5" fill="none" stroke="#5e5e5e" stroke-width="2.8" stroke-linecap="round"/><path d="M663 305 C660.5 312 661.5 320 663.2 326.5" fill="none" stroke="#b8b8b8" stroke-width="1.1" stroke-linecap="round"/><path d="M663 305 C660.5 312 661.5 320 663.2 326.5" fill="none" stroke="#e6e6e6" stroke-width="0.5" stroke-linecap="round"/><path d="M667.5 306 C666.2 312 667 318 669 323.5" fill="none" stroke="#5e5e5e" stroke-width="2.2" stroke-linecap="round"/><path d="M667.5 306 C666.2 312 667 318 669 323.5" fill="none" stroke="#b8b8b8" stroke-width="0.6" stroke-linecap="round"/><path d="M682 327.5 L675.5 320.5 L669.5 323 L674.5 327.5 L671 332.5 L678.5 332.5 L682.5 330.5Z" fill="#7c7c7c" stroke="#505050" stroke-width=".8" stroke-linejoin="round"/></g><use href="#rin" transform="translate(1372 0) scale(-1 1)"/>
<path d="M682.4 262 L689.6 262 L691.6 300 L692.2 317 L679.8 317 L680.4 300Z" fill="#c4c4c4" stroke="#686868" stroke-width=".9"/>
<path d="M684.6 262 L683.6 317 M687.4 262 L688.4 317" stroke="#848484" stroke-width=".9"/>
<path d="M679.8 318 L692.2 318 L688.4 343 L686 346.5 L683.6 343Z" fill="#c0c0c0" stroke="#686868" stroke-width=".9"/>
<path d="M682.6 320 L684.8 343 M686 320 V345 M689.4 320 L687.2 343" stroke="#7c7c7c" stroke-width=".9"/>
<circle cx="686" cy="252.4" r="12.6" fill="url(#rFlow)" stroke="#4e4e4e" stroke-width="1.2" stroke-dasharray="5.6 1"/>
<circle cx="686" cy="252.4" r="5.4" fill="url(#rSph)"/>
<ellipse cx="686" cy="317" rx="8.6" ry="3.8" fill="#c8c8c8" stroke="#606060" stroke-width="1"/>
<path d="M678 316.5 C680.5 321.5 691.5 321.5 694 316.5" fill="none" stroke="#f2f2f2" stroke-width="1.3"/>
<rect x="667.6" y="367.5" width="36.8" height="28" fill="#cfcfcf" stroke="#6e6e6e" stroke-width="1"/>
<rect x="671.2" y="369" width="29.6" height="23" fill="none" stroke="#f0f0f0" stroke-width="1.2"/>
<rect x="673.6" y="369.5" width="24.8" height="20" fill="none" stroke="#8c8c8c" stroke-width=".8"/>
<rect x="676.4" y="371" width="19.2" height="14.5" fill="#b4b4b4" stroke="#8a8a8a" stroke-width=".8"/>
<path d="M663 359 C670 369.5 702 369.5 709 359 C708 374.5 664 374.5 663 359Z" fill="#a8a8a8" stroke="#686868" stroke-width=".9" stroke-dasharray="3.2 1"/>
<path d="M686 396.5 V438" fill="none" stroke="#6a6a6a" stroke-width="4.6" stroke-linecap="round"/><path d="M686 396.5 V438" fill="none" stroke="#b8b8b8" stroke-width="2.9" stroke-linecap="round"/><path d="M686 396.5 V438" fill="none" stroke="#e6e6e6" stroke-width="1.2" stroke-linecap="round"/>
<path d="M683 452.0 L689 452.0 L702 476.1 L696 480.0 L690.5 480.9 L686 481.9 L681.5 480.9 L676 480.0 L670 476.1 Z" fill="#8e8e8e" stroke="#5e5e5e" stroke-width=".8" stroke-linejoin="round"/><g><path d="M683.2 453.4 C681 460.7 675.5 470.3 671 476.6" fill="none" stroke="#606060" stroke-width="5.6" stroke-linecap="round"/><path d="M683.2 453.4 C681 460.7 675.5 470.3 671 476.6" fill="none" stroke="#b0b0b0" stroke-width="3.9" stroke-linecap="round"/><path d="M683.2 453.4 C681 460.7 675.5 470.3 671 476.6" fill="none" stroke="#e0e0e0" stroke-width="1.6" stroke-linecap="round"/><path d="M684.6 454.4 C683.4 462.6 680 472.2 677 478.5" fill="none" stroke="#606060" stroke-width="5.2" stroke-linecap="round"/><path d="M684.6 454.4 C683.4 462.6 680 472.2 677 478.5" fill="none" stroke="#b0b0b0" stroke-width="3.5" stroke-linecap="round"/><path d="M684.6 454.4 C683.4 462.6 680 472.2 677 478.5" fill="none" stroke="#e0e0e0" stroke-width="1.5" stroke-linecap="round"/><path d="M685.4 455.4 C685 463.6 683.4 473.2 682.2 479.5" fill="none" stroke="#606060" stroke-width="4.6" stroke-linecap="round"/><path d="M685.4 455.4 C685 463.6 683.4 473.2 682.2 479.5" fill="none" stroke="#b0b0b0" stroke-width="2.9" stroke-linecap="round"/><path d="M685.4 455.4 C685 463.6 683.4 473.2 682.2 479.5" fill="none" stroke="#e0e0e0" stroke-width="1.2" stroke-linecap="round"/></g><g transform="translate(1372 0) scale(-1 1)"><path d="M683.2 453.4 C681 460.7 675.5 470.3 671 476.6" fill="none" stroke="#606060" stroke-width="5.6" stroke-linecap="round"/><path d="M683.2 453.4 C681 460.7 675.5 470.3 671 476.6" fill="none" stroke="#b0b0b0" stroke-width="3.9" stroke-linecap="round"/><path d="M683.2 453.4 C681 460.7 675.5 470.3 671 476.6" fill="none" stroke="#e0e0e0" stroke-width="1.6" stroke-linecap="round"/><path d="M684.6 454.4 C683.4 462.6 680 472.2 677 478.5" fill="none" stroke="#606060" stroke-width="5.2" stroke-linecap="round"/><path d="M684.6 454.4 C683.4 462.6 680 472.2 677 478.5" fill="none" stroke="#b0b0b0" stroke-width="3.5" stroke-linecap="round"/><path d="M684.6 454.4 C683.4 462.6 680 472.2 677 478.5" fill="none" stroke="#e0e0e0" stroke-width="1.5" stroke-linecap="round"/><path d="M685.4 455.4 C685 463.6 683.4 473.2 682.2 479.5" fill="none" stroke="#606060" stroke-width="4.6" stroke-linecap="round"/><path d="M685.4 455.4 C685 463.6 683.4 473.2 682.2 479.5" fill="none" stroke="#b0b0b0" stroke-width="2.9" stroke-linecap="round"/><path d="M685.4 455.4 C685 463.6 683.4 473.2 682.2 479.5" fill="none" stroke="#e0e0e0" stroke-width="1.2" stroke-linecap="round"/></g><path d="M684.4 459.7 L687.6 459.7 L689.6 483.3 L686 487.2 L682.4 483.3 Z" fill="#dadada" stroke="#6e6e6e" stroke-width=".8"/>
<path d="M686 437.5 C691 439 695.4 443.5 695.2 450 L690.5 447.5 L689 453 L686 448.5 L683 453 L681.5 447.5 L676.8 450 C676.6 443.5 681 439 686 437.5Z" fill="#c8c8c8" stroke="#666" stroke-width=".8" stroke-linejoin="round"/>
<circle cx="686.0" cy="444.5" r="2.6" fill="url(#rSph)" stroke="#7a7a7a" stroke-width=".5"/>
<path d="M683 490.0 L689 490.0 L702 517.7 L696 522.1 L690.5 523.2 L686 524.3 L681.5 523.2 L676 522.1 L670 517.7 Z" fill="#8e8e8e" stroke="#5e5e5e" stroke-width=".8" stroke-linejoin="round"/><g><path d="M683.2 491.7 C681 500.0 675.5 511.0 671 518.2" fill="none" stroke="#606060" stroke-width="5.6" stroke-linecap="round"/><path d="M683.2 491.7 C681 500.0 675.5 511.0 671 518.2" fill="none" stroke="#b0b0b0" stroke-width="3.9" stroke-linecap="round"/><path d="M683.2 491.7 C681 500.0 675.5 511.0 671 518.2" fill="none" stroke="#e0e0e0" stroke-width="1.6" stroke-linecap="round"/><path d="M684.6 492.8 C683.4 502.2 680 513.2 677 520.4" fill="none" stroke="#606060" stroke-width="5.2" stroke-linecap="round"/><path d="M684.6 492.8 C683.4 502.2 680 513.2 677 520.4" fill="none" stroke="#b0b0b0" stroke-width="3.5" stroke-linecap="round"/><path d="M684.6 492.8 C683.4 502.2 680 513.2 677 520.4" fill="none" stroke="#e0e0e0" stroke-width="1.5" stroke-linecap="round"/><path d="M685.4 493.9 C685 503.3 683.4 514.4 682.2 521.6" fill="none" stroke="#606060" stroke-width="4.6" stroke-linecap="round"/><path d="M685.4 493.9 C685 503.3 683.4 514.4 682.2 521.6" fill="none" stroke="#b0b0b0" stroke-width="2.9" stroke-linecap="round"/><path d="M685.4 493.9 C685 503.3 683.4 514.4 682.2 521.6" fill="none" stroke="#e0e0e0" stroke-width="1.2" stroke-linecap="round"/></g><g transform="translate(1372 0) scale(-1 1)"><path d="M683.2 491.7 C681 500.0 675.5 511.0 671 518.2" fill="none" stroke="#606060" stroke-width="5.6" stroke-linecap="round"/><path d="M683.2 491.7 C681 500.0 675.5 511.0 671 518.2" fill="none" stroke="#b0b0b0" stroke-width="3.9" stroke-linecap="round"/><path d="M683.2 491.7 C681 500.0 675.5 511.0 671 518.2" fill="none" stroke="#e0e0e0" stroke-width="1.6" stroke-linecap="round"/><path d="M684.6 492.8 C683.4 502.2 680 513.2 677 520.4" fill="none" stroke="#606060" stroke-width="5.2" stroke-linecap="round"/><path d="M684.6 492.8 C683.4 502.2 680 513.2 677 520.4" fill="none" stroke="#b0b0b0" stroke-width="3.5" stroke-linecap="round"/><path d="M684.6 492.8 C683.4 502.2 680 513.2 677 520.4" fill="none" stroke="#e0e0e0" stroke-width="1.5" stroke-linecap="round"/><path d="M685.4 493.9 C685 503.3 683.4 514.4 682.2 521.6" fill="none" stroke="#606060" stroke-width="4.6" stroke-linecap="round"/><path d="M685.4 493.9 C685 503.3 683.4 514.4 682.2 521.6" fill="none" stroke="#b0b0b0" stroke-width="2.9" stroke-linecap="round"/><path d="M685.4 493.9 C685 503.3 683.4 514.4 682.2 521.6" fill="none" stroke="#e0e0e0" stroke-width="1.2" stroke-linecap="round"/></g><path d="M684.4 498.9 L687.6 498.9 L689.6 526.0 L686 530.4 L682.4 526.0 Z" fill="#dadada" stroke="#6e6e6e" stroke-width=".8"/>
<circle cx="685.8" cy="539" r="5.2" fill="#cdcdcd" stroke="#5e5e5e" stroke-width="1"/><circle cx="685.8" cy="539" r="3" fill="#e8e8e8" stroke="#8a8a8a" stroke-width=".6"/>
<circle cx="685.8" cy="551.5" r="4.2" fill="url(#rSph)" stroke="#7a7a7a" stroke-width=".5"/>
<circle cx="685.8" cy="562.0" r="3.1" fill="url(#rSph)" stroke="#7a7a7a" stroke-width=".5"/>
<circle cx="685.8" cy="570.0" r="2.5" fill="url(#rSph)" stroke="#7a7a7a" stroke-width=".5"/>
</svg>
<!-- ================= RIGHT PANEL ================= -->
<!-- Vectors -->
<div class="rh" style="top:45px"><span>Vectors</span></div><div class="rhb" style="top:46px"><i></i></div>
<div class="combo" style="top:62px"><span>Default Sheet</span><b><i></i></b></div>
<!--R_ICONS_V-->
<div class="row" style="top:112px;height:25px"></div>
<div class="a" style="left:1106px;top:116px;width:17px;height:18px;background:#ececec;border-left:1px solid #fff;border-top:1px solid #fff;border-right:1px solid #999;border-bottom:1px solid #999"></div>
<div class="a" style="left:1108px;top:119px;width:13px;height:13px;border-radius:50%;background:#000"></div>
<div class="t" style="left:1128px;top:119px">Default Layer</div>
<!-- Bitmaps -->
<div class="rh" style="top:172px"><span>Bitmaps</span></div><div class="rhb" style="top:173px"><i></i></div>
<!--R_ICONS_B-->
<div class="row" style="top:213px;height:24px"></div>
<div class="t" style="left:1128px;top:219px">Bitmap Layer 1</div>
<!-- Reliefs -->
<div class="rh" style="top:253px"><span>Reliefs</span></div><div class="rhb" style="top:254px"><i></i></div>
<div class="combo" style="top:270px"><span>Front Relief</span><b><i></i></b></div>
<!--R_ICONS_R-->
<div class="row" style="top:320px;height:26px"></div>
<svg style="left:1138px;top:329px" width="5" height="8" viewBox="0 0 5 8"><path d="M0.5 0.5 L4.5 4 L0.5 7.5Z" fill="#000"/></svg>
<div class="t" style="left:1149px;top:327px">Relief Layer 1</div>
<!-- bottom tabs -->
<svg style="left:1094px;top:721px" width="272" height="26"><filter id="nz2" color-interpolation-filters="sRGB" x="0" y="0" width="100%" height="100%"><feTurbulence type="fractalNoise" baseFrequency="0.35" numOctaves="2" seed="7"/><feColorMatrix type="matrix" values="0 0 0 0 0.80  0 0 0 0 0.80  0 0 0 0 0.80  1.6 0 0 0 0.0"/></filter><rect width="272" height="26" fill="#f2f2f2"/><rect width="272" height="26" filter="url(#nz2)"/></svg>
<div class="a" style="left:1143px;top:721px;width:223px;height:1px;background:#a8a8a8"></div>
<div class="a" style="left:1094px;top:721px;width:50px;height:26px;background:#f0f0f0;border-bottom-right-radius:7px"></div>
<div class="a" style="left:1143px;top:721px;width:49px;height:25px;background:#f3f3f3;border:1px solid #b0b0b0;border-top-color:#c8c8c8;border-radius:0 0 6px 6px"></div>
<div class="a" style="left:1089px;top:747px;width:277px;height:1px;background:#a8a8a8"></div>
<div class="t ui" style="left:1103px;top:727px;font-size:12.5px;letter-spacing:-.4px">Layers</div>
<div class="t ui" style="left:1151px;top:728px;font-size:12.5px">Add In</div>
<svg width="0" height="0" style="left:0;top:0"><defs>
<g id="sNew"><path d="M9 11 L14.5 11 L11.5 15.5 L3 15.5Z" fill="#b8b8b8" opacity=".7"/><path d="M1 1 L6.6 1 L7.2 4.2 L11.4 7.4 L11.4 15 L1 15Z" fill="url(#gDoc)"/><path d="M1 1 L3.4 1 L3.4 15 L1 15Z" fill="#e4ecf6" opacity=".55"/><path d="M6.6 1 L7.2 4.2 L11.4 7.4Z" fill="#f4f7fb"/></g>
<g id="sFold"><path d="M4 10.5 L15 7.5 L14 10 L5 13Z" fill="#c0c0c0" opacity=".6"/><path d="M1.5 3 L4.5 0.8 L8.5 0.8 L9.5 2.2 L12 2.2 L12 5 L2.5 11.5 L1.2 10Z" fill="#f4e21e"/><path d="M1.5 11.5 L4 6.8 L15 5.2 L13 9.8 L4 12.2Z" fill="#f0da18"/></g>
<g id="sSave"><path d="M11 8 L16 8.5 L13 12 L11 12Z" fill="#c0c0d0" opacity=".7"/><rect x="0.8" y="0.8" width="11.5" height="11.5" rx=".8" fill="#1d55b8"/><rect x="3" y="0.8" width="7" height="5" fill="#e8ecf4"/><rect x="3.4" y="7.6" width="6.4" height="4.7" fill="#a4bcdc"/><rect x="4.6" y="8.6" width="1.8" height="3" fill="#1d55b8"/></g>
<g id="sPap"><path d="M9 12 L16.5 12 L15 15.5 L6 15.5Z" fill="#c4c4c4" opacity=".6"/><path d="M1.5 0.8 L9 0.8 L9 11 L1.5 11Z" fill="#c4a47c"/><path d="M4 3.2 L11.5 3.2 L11.5 13 L4 13Z" fill="#b8946a"/><path d="M6.5 5.5 L12 5.5 L14.5 8 L14.5 15 L6.5 15Z" fill="#c8a880"/><path d="M1.5 2.5 h-1 M1.5 4.5 h-1 M1.5 6.5 h-1 M1.5 8.5 h-1" stroke="#b8946a" stroke-width=".8"/></g>
<g id="sBulbDoc"><rect x="0.5" y="0.5" width="10.5" height="15" fill="#a8b8cc"/><rect x="0.5" y="0.5" width="3" height="15" fill="#d4dce8"/><circle cx="6.5" cy="6.5" r="4.6" fill="url(#gBulb)"/><path d="M4.8 10.5 H8.2 V13.6 H4.8Z" fill="#3a2a10"/><path d="M4.8 10.4 L8.2 10.4 L7.6 8.5 L5.4 8.5Z" fill="#e8b030"/></g>
<g id="sBuck"><ellipse cx="5.2" cy="11.3" rx="3.8" ry="1.3" fill="#7aa0e0"/><path d="M0.8 3 L1.8 11 C3.5 12.8 7 12.8 8.6 11 L9.6 3Z" fill="#5a90e0"/><path d="M2.4 4 L3 11.6 C3.6 12 4.4 12.2 5 12.2 L4.6 4Z" fill="#a8c8f4"/><ellipse cx="5.2" cy="2.8" rx="4.6" ry="1.9" fill="#c4dcf8" stroke="#4a80d0" stroke-width=".8"/></g>
<g id="sBulbs"><rect x="0" y="0" width="17" height="17" fill="#ececec"/><path d="M0 17 V0 H17" fill="none" stroke="#fff" stroke-width="1"/><path d="M0.5 17 V0.5 H17" fill="none" stroke="#c8a860" stroke-width="1" opacity=".6"/><circle cx="5.8" cy="6.8" r="4.6" fill="url(#gBulb)"/><path d="M4.2 10.6 H7.4 V14.8 H4.2Z" fill="#2a1c08"/><circle cx="11.8" cy="5.2" r="4.6" fill="url(#gBulb)"/><path d="M10.2 9 H13.4 V13.5 H10.2Z" fill="#2a1c08"/><path d="M10.2 9 L13.4 9 L12.8 7.4 L10.8 7.4Z M4.2 10.6 L7.4 10.6 L6.8 9 L4.8 9Z" fill="#e0a020"/></g>
<g id="sBulb1"><rect x="0" y="0" width="17" height="17" fill="#d0d0d0"/><path d="M0.5 17 V0.5 H17" fill="none" stroke="#a8a8a8" stroke-width="1"/><path d="M16.5 0 V16.5 H0" fill="none" stroke="#f4f4f4" stroke-width="1"/><circle cx="8.6" cy="6.6" r="4.8" fill="url(#gBulb)"/><path d="M6.8 10.6 H10.4 V14.6 H6.8Z" fill="#2a1c08"/><path d="M6.8 10.6 L10.4 10.6 L9.8 9 L7.4 9Z" fill="#e0a020"/></g>
<g id="sUp"><rect x="0" y="0" width="12" height="12" rx="1" fill="#1c4ca0"/><rect x="0.5" y="0.5" width="11" height="11" rx="1" fill="none" stroke="#0c2c70" stroke-width="1"/><path d="M6 10 V3.2 M2.6 6 L6 2.6 L9.4 6" fill="none" stroke="#fff" stroke-width="1.8"/></g>
<g id="sDn"><rect x="0" y="0" width="12" height="12" rx="1" fill="#1c4ca0"/><rect x="0.5" y="0.5" width="11" height="11" rx="1" fill="none" stroke="#0c2c70" stroke-width="1"/><path d="M6 2 V8.8 M2.6 6 L6 9.4 L9.4 6" fill="none" stroke="#fff" stroke-width="1.8"/></g>
<g id="sMona"><rect x="0" y="0" width="16" height="17" fill="#7c7434"/><rect x="8" y="0" width="8" height="9" fill="#c4c478"/><rect x="0" y="0" width="8" height="5" fill="#a8a460"/><path d="M0 17 C0 11 3 9.5 8 9.5 C13 9.5 16 11.5 16 17Z" fill="#1c1408"/><path d="M2.5 7 C2.5 0.5 12.5 0.5 12.5 7 L14 13 L1.5 13Z" fill="#2a1a0a"/><ellipse cx="7.8" cy="6.2" rx="2.6" ry="3.5" fill="#d0a460"/><path d="M5.5 10.5 L10 10.5 L11 14 L8 16.5 L5 14Z" fill="#d8c068"/></g>
</defs></svg>
<!-- Vectors icon row (y 91..107) -->
<svg style="left:1103px;top:91px" width="16" height="16"><use href="#sNew"/></svg>
<svg style="left:1139px;top:92px" width="16" height="14"><use href="#sFold"/></svg>
<svg style="left:1176px;top:92px" width="17" height="13"><use href="#sSave"/></svg>
<svg style="left:1212px;top:91px" width="17" height="16"><use href="#sPap"/></svg>
<svg style="left:1251px;top:91px" width="12" height="16"><use href="#sBulbDoc"/></svg>
<svg style="left:1290px;top:93px" width="11" height="13"><use href="#sBuck"/></svg>
<svg style="left:1323px;top:90px" width="17" height="17"><use href="#sBulbs"/></svg>
<!-- Default Layer row icons -->
<svg style="left:1288px;top:116px" width="16" height="17" viewBox="0 0 16 17"><rect x="0" y="0" width="16" height="17" fill="#c4c4c4"/><path d="M0.5 17 V0.5 H16" fill="none" stroke="#f4f4f4" stroke-width="1"/><path d="M15.5 0 V16.5 H0" fill="none" stroke="#8c8c8c" stroke-width="1"/><path d="M5.5 8 V5.5 C5.5 2.2 12 2.2 12 5.5 V8" fill="none" stroke="#e8e8e8" stroke-width="1.8"/><rect x="4" y="8" width="9.5" height="7" fill="#9a9a9a"/><path d="M8.7 14.5 V11.5 M7 12.5 L8.7 10.5 L10.4 12.5" stroke="#111" stroke-width="1.3" fill="none"/></svg>
<svg style="left:1306px;top:116px" width="17" height="17" viewBox="0 0 17 17"><rect x="0" y="0" width="17" height="17" fill="#e6e6e6"/><path d="M2.5 0.5 V16 M0.5 14 H16.5" stroke="#000" stroke-width="1" stroke-dasharray="2 1.2"/><path d="M14.5 1.5 L6 10" stroke="#000" stroke-width="2"/><path d="M4.5 11.8 L6 5.8 L10.4 10.2Z" fill="#000"/></svg>
<svg style="left:1324px;top:116px" width="17" height="17"><use href="#sBulb1"/></svg>
<svg style="left:1312px;top:141px" width="12" height="12"><use href="#sUp"/></svg>
<svg style="left:1330px;top:141px" width="12" height="12"><use href="#sDn"/></svg>
<!-- Bitmaps icon row (y 192..207) -->
<svg style="left:1103px;top:192px" width="16" height="16"><use href="#sNew"/></svg>
<svg style="left:1135px;top:193px" width="16" height="14"><use href="#sFold"/></svg>
<svg style="left:1166px;top:193px" width="17" height="13"><use href="#sSave"/></svg>
<svg style="left:1197px;top:192px" width="17" height="16"><use href="#sPap"/></svg>
<svg style="left:1230px;top:193px" width="17" height="14" viewBox="0 0 17 14"><path d="M11 9 L16.5 7.5 L14 13.5 L11 13.5Z" fill="#b0b0b0" opacity=".8"/><rect x="0.5" y="0.5" width="12" height="12.5" fill="url(#gGrey)"/><rect x="0.5" y="0.5" width="12" height="5" fill="#b0b0b0" opacity=".55"/></svg>
<svg style="left:1260px;top:192px" width="18" height="16" viewBox="0 0 18 16"><path d="M6 6.5 L16 6.5 L17.5 14.5 L5 14.5Z" fill="#6c78c8"/><path d="M7 7.5 L15.3 7.5 L16.3 13.5 L6.2 13.5Z" fill="#9098dc"/><g transform="scale(.62 .66)"><use href="#sMona"/></g></svg>
<svg style="left:1295px;top:194px" width="11" height="13"><use href="#sBuck"/></svg>
<svg style="left:1323px;top:191px" width="17" height="17"><use href="#sBulbs"/></svg>
<svg style="left:1105px;top:216px" width="17" height="17" viewBox="0 0 16 17" preserveAspectRatio="none"><use href="#sMona"/></svg>
<!-- Reliefs icon row (y 299..315) -->
<svg style="left:1103px;top:299px" width="16" height="16"><use href="#sNew"/></svg>
<svg style="left:1130px;top:300px" width="16" height="14"><use href="#sFold"/></svg>
<svg style="left:1157px;top:300px" width="17" height="13"><use href="#sSave"/></svg>
<svg style="left:1185px;top:299px" width="17" height="16"><use href="#sPap"/></svg>
<svg style="left:1212px;top:299px" width="18" height="16" viewBox="0 0 18 16"><path d="M1 10.5 L9 6.5 L17 10.5 L9 15Z" fill="#a81010"/><path d="M5.5 10.6 L9 8.6 L12.5 10.6 L9 12.8Z" fill="#f4e8d0"/><path d="M9 7 V11 M7.4 9.6 L9 11.6 L10.6 9.6" stroke="#e08010" stroke-width="1.4" fill="none"/><path d="M1 4.8 L9 0.8 L17 4.8 L9 9Z" fill="#7480d8" opacity=".92"/></svg>
<svg style="left:1243px;top:299px" width="12" height="16"><use href="#sBulbDoc"/></svg>
<svg style="left:1270px;top:300px" width="15" height="15" viewBox="0 0 15 15"><rect x="0" y="0" width="14.5" height="14.5" fill="#050505"/><circle cx="4.8" cy="3" r="1.4" fill="#aaa"/><circle cx="9.6" cy="3" r="1.4" fill="#aaa"/><ellipse cx="7.2" cy="4.6" rx="3" ry="2.3" fill="#c8c8c8"/><ellipse cx="7.2" cy="9.6" rx="4.4" ry="4" fill="#d8d8d8"/><ellipse cx="7.2" cy="10.2" rx="2" ry="2.1" fill="#8a8a8a"/><path d="M11 3.5 H13.5 M12.2 3.5 V6.5" stroke="#eee" stroke-width=".9"/><path d="M1.5 6 H3.5" stroke="#eee" stroke-width=".9"/></svg>
<svg style="left:1299px;top:301px" width="11" height="13"><use href="#sBuck"/></svg>
<svg style="left:1323px;top:298px" width="17" height="17"><use href="#sBulbs"/></svg>
<!-- Relief Layer row icons -->
<svg style="left:1111px;top:323px" width="22" height="21" viewBox="0 0 22 21"><path d="M2 9 C3 3 11 0.5 16 4 C19 6.5 20.5 10 21 14 L17 15.5 C16 10 13 6.5 9 7 C6 7.4 4 9 3.5 12.5Z" fill="#c8a850"/><path d="M2 9 C3 3 11 0.5 16 4 C18 5.6 19 7 19.8 9 C16 4.5 9 2.5 3.5 8Z" fill="#ecd890"/><path d="M3.5 12.5 C4 9 6 7.4 9 7 C13 6.5 16 10 17 15.5 C12 17 7 16 3.5 12.5Z" fill="#8088d0"/><path d="M4 13 V20 M0.6 16.5 H7.4" stroke="#000" stroke-width="1.2"/></svg>
<svg style="left:1323px;top:323px" width="17" height="17"><use href="#sBulb1"/></svg>
<svg style="left:1312px;top:349px" width="12" height="12"><use href="#sUp"/></svg>
<svg style="left:1330px;top:349px" width="12" height="12"><use href="#sDn"/></svg>
<!-- ================= STATUS BAR ================= -->
<div class="sp ui" style="left:1023px;width:66px;padding-left:1px;letter-spacing:-.3px">X: -248.856</div>
<div class="sp ui" style="left:1092px;width:66px;padding-left:1px;letter-spacing:-.3px">Y: -354.364</div>
<div class="sp" style="left:1161px;width:60px"></div>
<div class="sp" style="left:1224px;width:70px"></div>
<div class="sp" style="left:1297px;width:69px"></div>
</div>
</body>
</html>
